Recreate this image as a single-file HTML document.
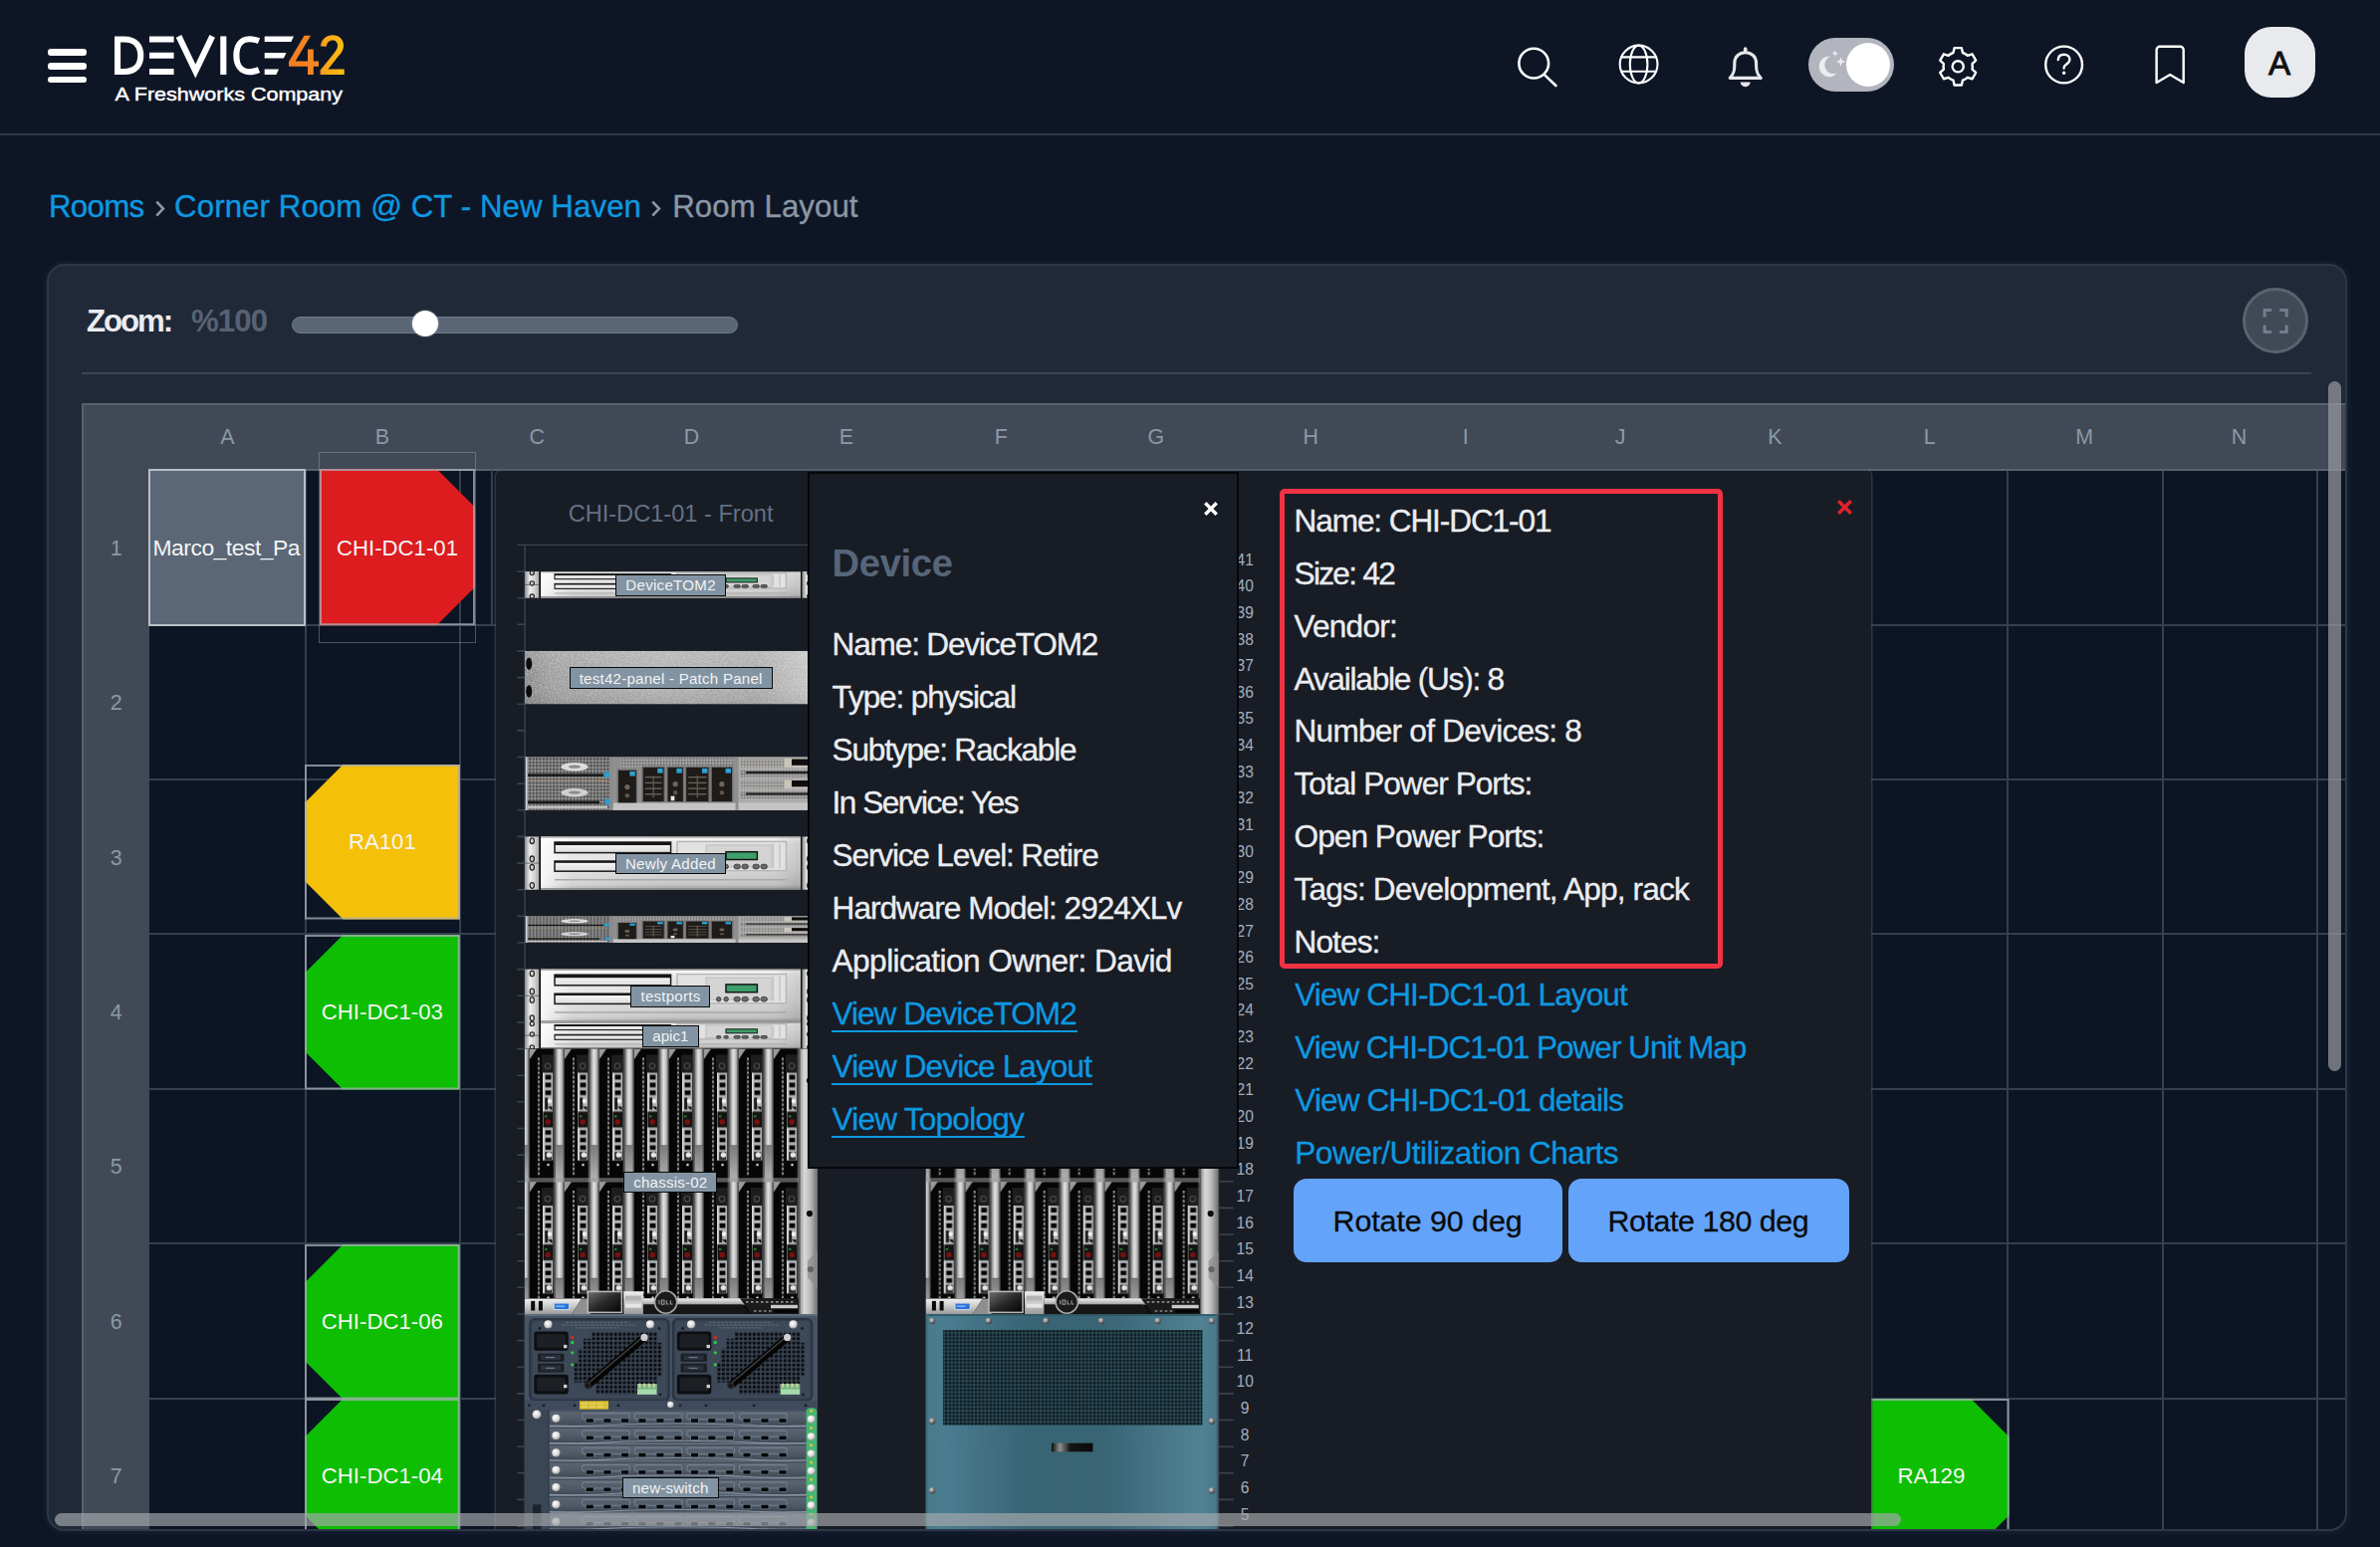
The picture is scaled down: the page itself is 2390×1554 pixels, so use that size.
<!DOCTYPE html>
<html lang="en"><head><meta charset="utf-8"><title>Room Layout - Device42</title>
<style>
*{box-sizing:border-box;margin:0;padding:0}
html,body{width:2390px;height:1554px;overflow:hidden;background:#0e1626;}
body{position:relative;font-family:"Liberation Sans",sans-serif;}
span{position:absolute;white-space:pre;display:block}
div{position:absolute}
svg{position:absolute;overflow:visible}
a{color:inherit}
</style></head><body>
<div style="left:0;top:133.6px;width:2390px;height:2.2px;background:#2f394b"></div>
<div style="left:48.3px;top:49.3px;width:38.8px;height:6.4px;border-radius:3.2px;background:#fff"></div>
<div style="left:48.3px;top:63.2px;width:38.8px;height:6.4px;border-radius:3.2px;background:#fff"></div>
<div style="left:48.3px;top:76.9px;width:38.8px;height:6.4px;border-radius:3.2px;background:#fff"></div>
<svg style="left:0;top:0" width="400" height="130" viewBox="0 0 400 130">
<defs><linearGradient id="lg42" gradientUnits="userSpaceOnUse" x1="291" y1="0" x2="346" y2="0"><stop offset="0" stop-color="#f47c20"/><stop offset="0.5" stop-color="#f6881f"/><stop offset="0.62" stop-color="#f9a21a"/><stop offset="1" stop-color="#fcc00f"/></linearGradient></defs>
<g fill="none" stroke="#fff" stroke-width="6.1">
<path d="M118.05 36.4V75M115 39.45H124.5C136.6 39.45 141.25 47 141.25 55.7C141.25 64.4 136.6 71.95 124.5 71.95H115"/>
<path d="M150 39.45H174.6M150 55.7H174.6M150 71.95H174.6"/>
<path d="M179.5 36.4L196.3 71.5L213.2 36.4" stroke-linejoin="miter" stroke-miterlimit="8"/>
<path d="M224.3 36.4V75"/>
<path d="M260 41.2C256 39.6 253.5 39.2 250.5 39.2C241.5 39.2 237.4 46.7 237.4 55.7C237.4 64.7 241.5 72.2 250.5 72.2C253.5 72.2 256 71.8 260 70.2"/>
</g>
<g fill="#fff">
<path d="M265.7 36.4H295L292.4 42H265.7Z"/><path d="M265.7 52.9H287.5L284.9 58.5H265.7Z"/><path d="M265.7 69.4H280L277.4 75H265.7Z"/>
</g>
<g fill="url(#lg42)">
<path d="M305.5 35.7H312L296.6 61.5H309V49.5H314.8V61.5H320V66.8H314.8V75H309V66.8H290V62Z"/>
<path d="M322 46.5C322.5 39.5 327.5 35.2 334 35.2C340.8 35.2 345 39.6 345 45.6C345 50.5 342.5 53.8 338.5 58L329.5 69.4H345.7V75H321.6V70.4L334 55.2C337.2 51.4 339 49 339 45.8C339 42.6 337 40.6 334 40.6C330.6 40.6 328.3 42.8 327.8 46.8Z"/>
</g>
</svg>
<svg style="left:0;top:0" width="400" height="130"><text x="115.6" y="100.7" font-family="Liberation Sans" font-size="18.2" fill="#fff" stroke="#fff" stroke-width="0.4" textLength="228.4" lengthAdjust="spacingAndGlyphs">A Freshworks Company</text></svg>
<svg style="left:0;top:0" width="2390" height="130" viewBox="0 0 2390 130" fill="none" stroke="#fff" stroke-width="2.6" stroke-linecap="round" stroke-linejoin="round">
<circle cx="1540.2" cy="63.6" r="14.9"/><path d="M1551.2 75.4L1562.4 86"/>
<g stroke-width="2.1"><circle cx="1645.6" cy="64.5" r="18.9"/><ellipse cx="1645.6" cy="64.5" rx="8.8" ry="18.9"/><path d="M1628.3 57.4H1662.9M1628.3 71.8H1662.9"/></g>
<g stroke="#e6e7ea" stroke-width="3.1"><path d="M1737.2 78.4H1768.2C1765 75 1763.6 72.5 1763.6 66V63.5C1763.6 57 1759 52.7 1752.7 52.7C1746.4 52.7 1741.8 57 1741.8 63.5V66C1741.8 72.5 1740.4 75 1737.2 78.4Z"/><path d="M1752.7 52.2V49" stroke-width="3.6"/></g>
<path d="M1747.7 82.6H1757.7A5 4.6 0 0 1 1747.7 82.6Z" fill="#e6e7ea" stroke="none"/>
</svg>
<div style="left:1815.9px;top:37.6px;width:86.4px;height:54.4px;border-radius:27.2px;background:#b2b5be"></div>
<div style="left:1853.9px;top:43px;width:44px;height:44px;border-radius:22px;background:#fff"></div>
<svg style="left:0;top:0" width="2390" height="130" viewBox="0 0 2390 130"><g fill="#ecedf0">
<path d="M1838.2 56.6A10.3 10.3 0 1 0 1844.8 73.6A7.6 7.6 0 0 1 1838.2 56.6Z"/>
<path d="M1842.7 50.3L1843.6 52.7L1846 53.6L1843.6 54.5L1842.7 56.9L1841.8 54.5L1839.4 53.6L1841.8 52.7Z"/>
<path d="M1848.5 57.2L1849.8 60.7L1853.3 62L1849.8 63.3L1848.5 66.8L1847.2 63.3L1843.7 62L1847.2 60.7Z"/>
</g></svg>
<svg style="left:0;top:0" width="2390" height="130" viewBox="0 0 2390 130" fill="none" stroke="#fff" stroke-width="2.4" stroke-linecap="round" stroke-linejoin="round">
<path d="M1961.45 53.00L1962.57 48.15L1969.83 48.15L1970.95 53.00A14.6 14.6 0 0 1 1975.78 55.78L1975.78 55.78L1980.54 54.33L1984.16 60.61L1980.53 64.01A14.6 14.6 0 0 1 1980.53 69.59L1980.53 69.59L1984.16 72.99L1980.54 79.27L1975.78 77.82A14.6 14.6 0 0 1 1970.95 80.60L1970.95 80.60L1969.83 85.45L1962.57 85.45L1961.45 80.60A14.6 14.6 0 0 1 1956.62 77.82L1956.62 77.82L1951.86 79.27L1948.24 72.99L1951.87 69.59A14.6 14.6 0 0 1 1951.87 64.01L1951.87 64.01L1948.24 60.61L1951.86 54.33L1956.62 55.78A14.6 14.6 0 0 1 1961.45 53.00Z"/><circle cx="1966.2" cy="66.8" r="5.6"/>
<circle cx="2072.6" cy="65" r="18.4"/>
<path d="M2066.8 60C2067 56.6 2069.6 54.8 2072.7 54.8C2076 54.8 2078.4 56.8 2078.4 59.7C2078.4 62.4 2076.6 63.5 2074.8 64.8C2073.2 65.9 2072.6 66.8 2072.6 68.6"/>
<circle cx="2072.6" cy="73.2" r="1.0" fill="#fff" stroke-width="1.5"/>
<path d="M2165.6 83V50A3.2 3.2 0 0 1 2168.8 46.8H2189.5A3.2 3.2 0 0 1 2192.7 50V83L2179.15 75Z"/>
</svg>
<div style="left:2254px;top:27px;width:71px;height:70.6px;border-radius:27px;background:#e8eaee"></div>
<span style="left:2277.90px;top:46.60px;font-size:33.2px;line-height:33.2px;color:#111;-webkit-text-stroke:0.9px #111;">A</span>
<span style="left:49.00px;top:192.19px;font-size:31.2px;line-height:31.2px;color:#0d99e1;letter-spacing:-0.682px;-webkit-text-stroke:0.35px #0d99e1;">Rooms</span>
<svg style="left:0;top:180px" width="900" height="60" viewBox="0 180 900 60" fill="none" stroke="#8b97a6" stroke-width="2.6"><path d="M157.3 202.6L163.9 209.6L157.3 216.6M655.3 202.6L661.9 209.6L655.3 216.6"/></svg>
<span style="left:175.10px;top:192.19px;font-size:31.2px;line-height:31.2px;color:#0d99e1;letter-spacing:0.101px;-webkit-text-stroke:0.35px #0d99e1;">Corner Room @ CT - New Haven</span>
<span style="left:675.20px;top:192.19px;font-size:31.2px;line-height:31.2px;color:#8b97a6;letter-spacing:0.084px;-webkit-text-stroke:0.35px #8b97a6;">Room Layout</span>
<div style="left:47px;top:265px;width:2310px;height:1273px;border-radius:18px;background:#202938;border:2px solid #2d3746;overflow:hidden;box-shadow:0 0 7px rgba(70,85,110,0.28)">
<div style="left:-49px;top:-267px;width:2390px;height:1554px">
<span style="left:86.90px;top:307.29px;font-size:31.2px;line-height:31.2px;color:#ebecf0;letter-spacing:-1.979px;font-weight:700;">Zoom:</span>
<span style="left:191.90px;top:307.29px;font-size:31.2px;line-height:31.2px;color:#566274;letter-spacing:-0.831px;font-weight:700;">%100</span>
<div style="left:292.8px;top:318.2px;width:448.4px;height:17.2px;border-radius:9px;background:#5a6676;border:1px solid #6f7a89"></div>
<div style="left:413.9px;top:312px;width:26px;height:26px;border-radius:13px;background:#fff;box-shadow:0 0 3px rgba(255,255,255,0.35)"></div>
<div style="left:82px;top:374px;width:2239px;height:2px;background:#3b4555"></div>
<div style="left:2252px;top:289px;width:66px;height:66px;border-radius:33px;background:#414856;border:3px solid #5b626e"></div>
<svg style="left:0;top:0" width="2390" height="400" viewBox="0 0 2390 400" fill="none" stroke="#6f7d8d" stroke-width="3.2"><path d="M2274.2 318.5V311.5H2281.2M2289.2 311.5H2296.2V318.5M2296.2 326.5V333.5H2289.2M2281.2 333.5H2274.2V326.5"/></svg>
<div style="left:82px;top:404.5px;width:2280px;height:1140px;background:#0c1524"></div>
<div style="left:82px;top:404.5px;width:2280px;height:67.5px;background:#424956"></div>
<div style="left:82px;top:404.5px;width:68px;height:1140px;background:#424956"></div>
<div style="left:82px;top:404.5px;width:2280px;height:2px;background:#59616d"></div>
<div style="left:82px;top:404.5px;width:2px;height:1140px;background:#59616d"></div>
<div style="left:305.9px;top:472.0px;width:2px;height:1080px;background:#353f4e"></div>
<div style="left:461.3px;top:472.0px;width:2px;height:1080px;background:#353f4e"></div>
<div style="left:616.7px;top:472.0px;width:2px;height:1080px;background:#353f4e"></div>
<div style="left:772.1px;top:472.0px;width:2px;height:1080px;background:#353f4e"></div>
<div style="left:927.5px;top:472.0px;width:2px;height:1080px;background:#353f4e"></div>
<div style="left:1082.9px;top:472.0px;width:2px;height:1080px;background:#353f4e"></div>
<div style="left:1238.3px;top:472.0px;width:2px;height:1080px;background:#353f4e"></div>
<div style="left:1393.7px;top:472.0px;width:2px;height:1080px;background:#353f4e"></div>
<div style="left:1549.1px;top:472.0px;width:2px;height:1080px;background:#353f4e"></div>
<div style="left:1704.5px;top:472.0px;width:2px;height:1080px;background:#353f4e"></div>
<div style="left:1859.9px;top:472.0px;width:2px;height:1080px;background:#353f4e"></div>
<div style="left:2015.3px;top:472.0px;width:2px;height:1080px;background:#353f4e"></div>
<div style="left:2170.7px;top:472.0px;width:2px;height:1080px;background:#353f4e"></div>
<div style="left:2326.1px;top:472.0px;width:2px;height:1080px;background:#353f4e"></div>
<div style="left:150px;top:471.0px;width:2210px;height:2px;background:#59616d"></div>
<div style="left:150px;top:626.5px;width:2210px;height:2px;background:#353f4e"></div>
<div style="left:150px;top:781.9px;width:2210px;height:2px;background:#353f4e"></div>
<div style="left:150px;top:937.3px;width:2210px;height:2px;background:#353f4e"></div>
<div style="left:150px;top:1092.8px;width:2210px;height:2px;background:#353f4e"></div>
<div style="left:150px;top:1248.2px;width:2210px;height:2px;background:#353f4e"></div>
<div style="left:150px;top:1403.7px;width:2210px;height:2px;background:#353f4e"></div>
<span style="left:221.26px;top:429.08px;font-size:21.4px;line-height:21.4px;color:#8a99a8;">A</span>
<span style="left:376.66px;top:429.08px;font-size:21.4px;line-height:21.4px;color:#8a99a8;">B</span>
<span style="left:531.47px;top:429.08px;font-size:21.4px;line-height:21.4px;color:#8a99a8;">C</span>
<span style="left:686.87px;top:429.08px;font-size:21.4px;line-height:21.4px;color:#8a99a8;">D</span>
<span style="left:842.86px;top:429.08px;font-size:21.4px;line-height:21.4px;color:#8a99a8;">E</span>
<span style="left:998.87px;top:429.08px;font-size:21.4px;line-height:21.4px;color:#8a99a8;">F</span>
<span style="left:1152.48px;top:429.08px;font-size:21.4px;line-height:21.4px;color:#8a99a8;">G</span>
<span style="left:1308.47px;top:429.08px;font-size:21.4px;line-height:21.4px;color:#8a99a8;">H</span>
<span style="left:1468.63px;top:429.08px;font-size:21.4px;line-height:21.4px;color:#8a99a8;">I</span>
<span style="left:1621.65px;top:429.08px;font-size:21.4px;line-height:21.4px;color:#8a99a8;">J</span>
<span style="left:1775.26px;top:429.08px;font-size:21.4px;line-height:21.4px;color:#8a99a8;">K</span>
<span style="left:1931.86px;top:429.08px;font-size:21.4px;line-height:21.4px;color:#8a99a8;">L</span>
<span style="left:2084.29px;top:429.08px;font-size:21.4px;line-height:21.4px;color:#8a99a8;">M</span>
<span style="left:2240.87px;top:429.08px;font-size:21.4px;line-height:21.4px;color:#8a99a8;">N</span>
<span style="left:110.76px;top:540.61px;font-size:21.4px;line-height:21.4px;color:#8a99a8;">1</span>
<span style="left:110.76px;top:696.06px;font-size:21.4px;line-height:21.4px;color:#8a99a8;">2</span>
<span style="left:110.76px;top:851.51px;font-size:21.4px;line-height:21.4px;color:#8a99a8;">3</span>
<span style="left:110.76px;top:1006.96px;font-size:21.4px;line-height:21.4px;color:#8a99a8;">4</span>
<span style="left:110.76px;top:1162.41px;font-size:21.4px;line-height:21.4px;color:#8a99a8;">5</span>
<span style="left:110.76px;top:1317.86px;font-size:21.4px;line-height:21.4px;color:#8a99a8;">6</span>
<span style="left:110.76px;top:1473.31px;font-size:21.4px;line-height:21.4px;color:#8a99a8;">7</span>
<div style="left:149.3px;top:471.4px;width:157.5px;height:157.2px;background:#5b6777;border:2.5px solid #b9bec5"></div>
<span style="left:153.50px;top:538.82px;font-size:22.9px;line-height:22.9px;color:#f4f4f4;letter-spacing:-0.497px;">Marco_test_Pa</span>
<div style="left:320.3px;top:453.8px;width:157.4px;height:192.2px;border:1.6px solid rgba(150,160,170,0.45)"></div>
<svg style="left:321px;top:471.4px" width="156" height="157.2"><polygon points="0,0 117.5,0 156,38.5 156,118.69999999999999 117.5,157.2 0,157.2" fill="#dc1c1e"/><rect x="1" y="1" width="154" height="155.2" fill="none" stroke="#aab0b8" stroke-opacity="0.75" stroke-width="2"/></svg>
<span style="left:337.95px;top:539.61px;font-size:22.2px;line-height:22.2px;color:#f4f4f4;">CHI-DC1-01</span>
<div style="left:492.8px;top:472px;width:2px;height:156px;background:#353f4e"></div>
<svg style="left:306px;top:768px" width="155.7" height="155.5"><polygon points="38.5,0 155.7,0 155.7,155.5 38.5,155.5 0,117.0 0,38.5" fill="#f5c008"/><rect x="1" y="1" width="153.7" height="153.5" fill="none" stroke="#aab0b8" stroke-opacity="0.75" stroke-width="2"/></svg>
<span style="left:349.91px;top:835.36px;font-size:22.2px;line-height:22.2px;color:#f4f4f4;">RA101</span>
<svg style="left:306px;top:938.6px" width="155.7" height="155.5"><polygon points="38.5,0 155.7,0 155.7,155.5 38.5,155.5 0,117.0 0,38.5" fill="#0dbe02"/><rect x="1" y="1" width="153.7" height="153.5" fill="none" stroke="#aab0b8" stroke-opacity="0.75" stroke-width="2"/></svg>
<span style="left:322.80px;top:1005.96px;font-size:22.2px;line-height:22.2px;color:#f4f4f4;">CHI-DC1-03</span>
<svg style="left:306px;top:1249.6px" width="155.7" height="155.5"><polygon points="38.5,0 155.7,0 155.7,155.5 38.5,155.5 0,117.0 0,38.5" fill="#0dbe02"/><rect x="1" y="1" width="153.7" height="153.5" fill="none" stroke="#aab0b8" stroke-opacity="0.75" stroke-width="2"/></svg>
<span style="left:322.80px;top:1316.96px;font-size:22.2px;line-height:22.2px;color:#f4f4f4;">CHI-DC1-06</span>
<svg style="left:306px;top:1405px" width="155.7" height="155.5"><polygon points="38.5,0 155.7,0 155.7,155.5 38.5,155.5 0,117.0 0,38.5" fill="#0dbe02"/><rect x="1" y="1" width="153.7" height="153.5" fill="none" stroke="#aab0b8" stroke-opacity="0.75" stroke-width="2"/></svg>
<span style="left:322.80px;top:1472.36px;font-size:22.2px;line-height:22.2px;color:#f4f4f4;">CHI-DC1-04</span>
<svg style="left:1861.5px;top:1405px" width="155.7" height="155.5"><polygon points="0,0 117.19999999999999,0 155.7,38.5 155.7,117.0 117.19999999999999,155.5 0,155.5" fill="#0dbe02"/><rect x="1" y="1" width="153.7" height="153.5" fill="none" stroke="#aab0b8" stroke-opacity="0.75" stroke-width="2"/></svg>
<span style="left:1905.41px;top:1472.36px;font-size:22.2px;line-height:22.2px;color:#f4f4f4;">RA129</span>
<div style="left:498px;top:473px;width:1381px;height:1100px;background:#181c25;border-radius:5px;box-shadow:0 0 0 1.5px rgba(70,80,95,0.55)"></div>
<span style="left:570.64px;top:505.02px;font-size:23.6px;line-height:23.6px;color:#647185;">CHI-DC1-01 - Front</span>
<svg style="left:0;top:0" width="2390" height="1554" viewBox="0 0 2390 1554"><defs>
<linearGradient id="gSilv" x1="0" y1="0" x2="0" y2="1"><stop offset="0" stop-color="#fbfbfb"/><stop offset="0.12" stop-color="#e9e9e9"/><stop offset="0.6" stop-color="#d9d9d9"/><stop offset="0.9" stop-color="#c6c6c6"/><stop offset="1" stop-color="#9a9a9a"/></linearGradient>
<linearGradient id="gSilvH" x1="0" y1="0" x2="1" y2="0"><stop offset="0" stop-color="#ffffff" stop-opacity="0.85"/><stop offset="0.12" stop-color="#ffffff" stop-opacity="0.25"/><stop offset="0.5" stop-color="#ffffff" stop-opacity="0"/><stop offset="0.9" stop-color="#000" stop-opacity="0.02"/><stop offset="1" stop-color="#000" stop-opacity="0.12"/></linearGradient>
<linearGradient id="gEar" x1="0" y1="0" x2="1" y2="0"><stop offset="0" stop-color="#8d8d8d"/><stop offset="0.35" stop-color="#ededed"/><stop offset="0.7" stop-color="#d2d2d2"/><stop offset="1" stop-color="#a4a4a4"/></linearGradient>
<linearGradient id="gSlot" x1="0" y1="0" x2="0" y2="1"><stop offset="0" stop-color="#fafafa"/><stop offset="1" stop-color="#dcdcdc"/></linearGradient>
<linearGradient id="gPatch" x1="0" y1="0" x2="1" y2="0"><stop offset="0" stop-color="#878787"/><stop offset="0.1" stop-color="#9c9c9c"/><stop offset="0.45" stop-color="#adadad"/><stop offset="0.8" stop-color="#a8a8a8"/><stop offset="1" stop-color="#c6c6c6"/></linearGradient>
<linearGradient id="gPatchV" x1="0" y1="0" x2="0" y2="1"><stop offset="0" stop-color="#fff" stop-opacity="0.12"/><stop offset="0.5" stop-color="#fff" stop-opacity="0"/><stop offset="1" stop-color="#000" stop-opacity="0.08"/></linearGradient>
<filter id="fNoise" x="0" y="0" width="100%" height="100%"><feTurbulence type="fractalNoise" baseFrequency="0.75" numOctaves="2" seed="3" result="n"/><feColorMatrix type="matrix" values="0 0 0 0 1  0 0 0 0 1  0 0 0 0 1  1.6 0 0 0 -0.62"/><feComposite in2="SourceGraphic" operator="in"/></filter>
<pattern id="pMeshL" width="3.4" height="3.4" patternUnits="userSpaceOnUse"><rect width="3.4" height="3.4" fill="#a2a2a2"/><rect x="0.6" y="0.6" width="2.5" height="2.5" fill="#4c4c4c"/></pattern>
<pattern id="pMeshM" width="3" height="3" patternUnits="userSpaceOnUse"><rect width="3" height="3" fill="#b2b2b2"/><rect x="0.6" y="0.6" width="2" height="2" fill="#666"/></pattern>
<linearGradient id="gHandle" x1="0" y1="0" x2="1" y2="0"><stop offset="0" stop-color="#666"/><stop offset="0.18" stop-color="#909090"/><stop offset="0.45" stop-color="#e4e4e4"/><stop offset="0.7" stop-color="#c2c2c2"/><stop offset="1" stop-color="#727272"/></linearGradient>
<linearGradient id="gHandleLo" x1="0" y1="0" x2="0" y2="1"><stop offset="0" stop-color="#7a7a7a"/><stop offset="1" stop-color="#b4b4b4"/></linearGradient>
<linearGradient id="gRail" x1="0" y1="0" x2="1" y2="0"><stop offset="0" stop-color="#8a8a8a"/><stop offset="0.3" stop-color="#d8d8d8"/><stop offset="0.6" stop-color="#bdbdbd"/><stop offset="1" stop-color="#6f6f6f"/></linearGradient>
<linearGradient id="gBar" x1="0" y1="0" x2="0" y2="1"><stop offset="0" stop-color="#f0f0f0"/><stop offset="0.5" stop-color="#c9c9c9"/><stop offset="1" stop-color="#9a9a9a"/></linearGradient>
<linearGradient id="gLcd" x1="0" y1="0" x2="1" y2="1"><stop offset="0" stop-color="#6a6a6a"/><stop offset="0.5" stop-color="#2a2a2a"/><stop offset="1" stop-color="#050505"/></linearGradient>
<pattern id="pBlade" width="35" height="133.5" patternUnits="userSpaceOnUse">
 <rect width="35" height="133.5" fill="#060606"/>
 <polygon points="4.5,0 12,0 4.5,11" fill="#9a9a9a"/>
 <rect x="12.7" y="9" width="2.6" height="119" fill="#1a1a1a"/>
 <path d="M14 9V128" stroke="#8c8c8c" stroke-width="2" stroke-dasharray="2.4 2.2"/>
 <rect x="17" y="6" width="12" height="18" fill="#1d1d1d"/>
 <circle cx="23" cy="17.2" r="2.8" fill="none" stroke="#4d4d4d" stroke-width="1.1"/>
 <rect x="18" y="24" width="10.3" height="88" fill="#b0b0b0"/>
 <rect x="18" y="24" width="1.6" height="88" fill="#d6d6d6"/>
 <rect x="20.6" y="26.2" width="5.8" height="4.6" fill="#050505"/><rect x="20.6" y="34" width="5.8" height="4.6" fill="#050505"/><rect x="20.6" y="41.8" width="5.8" height="4.6" fill="#050505"/>
 <rect x="20.2" y="49" width="3" height="12" fill="#1b1b1b"/><circle cx="25" cy="52.5" r="2.2" fill="#f2f2f2"/><polygon points="23,58 27.5,58 27.5,62" fill="#0a0a0a"/>
 <rect x="18.4" y="63" width="9.6" height="16" fill="#141414"/><circle cx="23.2" cy="73.4" r="2.7" fill="#7d0f0f"/><rect x="20" y="67" width="2.4" height="1.6" fill="#2c9b2c"/>
 <rect x="20.6" y="81.8" width="5.8" height="4.4" fill="#050505"/><rect x="20.6" y="89.4" width="5.8" height="4.4" fill="#050505"/><rect x="20.6" y="97" width="5.8" height="4.4" fill="#050505"/>
 <rect x="20.2" y="103.5" width="7" height="8" fill="#2a2a2a"/><circle cx="24.4" cy="106.5" r="2.7" fill="#e6e6e6"/>
 <rect x="22.4" y="115.4" width="2.2" height="2.2" fill="#dddddd"/>
 <rect x="28.6" y="0" width="1.4" height="133.5" fill="#3c3c3c"/>
 <rect x="29.8" y="0" width="9.7" height="96.8" fill="url(#gHandle)"/>
 <rect x="-5.2" y="0" width="9.7" height="96.8" fill="url(#gHandle)"/>
 <rect x="29.8" y="96.8" width="9.7" height="36.7" fill="url(#gHandleLo)"/>
 <rect x="-5.2" y="96.8" width="9.7" height="36.7" fill="url(#gHandleLo)"/>
 <rect x="29.8" y="0" width="1" height="133.5" fill="#555"/><rect x="3.6" y="0" width="0.9" height="133.5" fill="#4a4a4a"/>
</pattern>
<g id="chassis">
 <rect x="0" y="0" width="294" height="266.6" fill="#060606"/>
 <rect x="0" y="0" width="275" height="252" fill="url(#pBlade)"/>
 <rect x="0" y="129.6" width="275" height="4.4" fill="#9a9a9a" opacity="0.55"/>
 <rect x="275" y="0" width="19" height="266.6" fill="url(#gRail)"/>
 <rect x="275" y="0" width="1.6" height="266.6" fill="#5a5a5a"/>
 <circle cx="286" cy="32" r="3.1" fill="#0c0c0c"/><circle cx="287" cy="88" r="3.1" fill="#0c0c0c"/><circle cx="286" cy="165.5" r="3.1" fill="#0c0c0c"/><circle cx="287" cy="221.5" r="3.1" fill="#0c0c0c"/>
 <path d="M294 70L284 80V97L294 107Z M294 203L284 213V230L294 240Z" fill="#8b8b8b" opacity="0.7"/>
 <!-- bottom bar -->
 <rect x="0" y="250.6" width="275" height="16" fill="#0b0b0b"/>
 <polygon points="0,251 57,251 47,266.6 0,266.6" fill="url(#gBar)"/>
 <polygon points="57,251 66,251 66,266.6 47,266.6" fill="#8f8f8f"/>
 <rect x="6.2" y="253.3" width="4" height="9.6" fill="#0a0a0a"/><rect x="13.9" y="253.3" width="4" height="9.6" fill="#0a0a0a"/>
 <rect x="28.6" y="255" width="16.6" height="7.4" rx="1" fill="#cfd6de"/><rect x="29.8" y="256" width="14.2" height="5.4" fill="#2a73dc"/><rect x="31" y="257.8" width="9" height="1.6" fill="#7fb2f3"/>
 <rect x="62.5" y="243" width="35.6" height="22.6" fill="#b9b9b9"/><rect x="64" y="244.6" width="32.6" height="19.4" fill="url(#gLcd)"/>
 <rect x="99.3" y="243.6" width="19.6" height="23" fill="url(#gBar)"/><rect x="101" y="248" width="16" height="5" fill="#b3b3b3"/><rect x="101" y="256" width="16" height="4" fill="#e6e6e6"/>
 <rect x="119" y="250.6" width="110" height="6.4" fill="url(#gBar)"/>
 <polygon points="119,257 218,257 226,266.6 119,266.6" fill="#161616"/>
 <polygon points="216,250.6 275,250.6 275,266.6 228,266.6" fill="#1b1b1b"/>
 <path d="M222 254.3H272M230 263.4H250" stroke="#8a8a8a" stroke-width="1.6" stroke-dasharray="2.6 2.4"/>
 <rect x="247" y="257.2" width="27" height="3.4" fill="#c9c9c9"/><rect x="250" y="261.6" width="24" height="3.6" fill="#050505"/>
 <circle cx="141.6" cy="254.4" r="11.2" fill="#1b1b1b" stroke="#a7a7a7" stroke-width="1.6"/>
 <path d="M135 252.4V256.6M137.4 252.4H140V256.6H137.4ZM142.4 252.6V256.4H144.6M146.4 252.6V256.4H148.6" stroke="#9a9a9a" stroke-width="1.1" fill="none"/>
</g>
</defs><path d="M519.2 547.4H1243M527.1 547.4V1554M1223.6 547.4V1554" stroke="#3a434d" stroke-width="1.4" fill="none"/><path d="M519.2 574.0H527.1M1223.6 574.0H1238.8M519.2 600.7H527.1M1223.6 600.7H1238.8M519.2 627.3H527.1M1223.6 627.3H1238.8M519.2 654.0H527.1M1223.6 654.0H1238.8M519.2 680.6H527.1M1223.6 680.6H1238.8M519.2 707.2H527.1M1223.6 707.2H1238.8M519.2 733.9H527.1M1223.6 733.9H1238.8M519.2 760.5H527.1M1223.6 760.5H1238.8M519.2 787.2H527.1M1223.6 787.2H1238.8M519.2 813.8H527.1M1223.6 813.8H1238.8M519.2 840.4H527.1M1223.6 840.4H1238.8M519.2 867.1H527.1M1223.6 867.1H1238.8M519.2 893.7H527.1M1223.6 893.7H1238.8M519.2 920.4H527.1M1223.6 920.4H1238.8M519.2 947.0H527.1M1223.6 947.0H1238.8M519.2 973.6H527.1M1223.6 973.6H1238.8M519.2 1000.3H527.1M1223.6 1000.3H1238.8M519.2 1026.9H527.1M1223.6 1026.9H1238.8M519.2 1053.6H527.1M1223.6 1053.6H1238.8M519.2 1080.2H527.1M1223.6 1080.2H1238.8M519.2 1106.8H527.1M1223.6 1106.8H1238.8M519.2 1133.5H527.1M1223.6 1133.5H1238.8M519.2 1160.1H527.1M1223.6 1160.1H1238.8M519.2 1186.8H527.1M1223.6 1186.8H1238.8M519.2 1213.4H527.1M1223.6 1213.4H1238.8M519.2 1240.0H527.1M1223.6 1240.0H1238.8M519.2 1266.7H527.1M1223.6 1266.7H1238.8M519.2 1293.3H527.1M1223.6 1293.3H1238.8M519.2 1320.0H527.1M1223.6 1320.0H1238.8M519.2 1346.6H527.1M1223.6 1346.6H1238.8M519.2 1373.2H527.1M1223.6 1373.2H1238.8M519.2 1399.9H527.1M1223.6 1399.9H1238.8M519.2 1426.5H527.1M1223.6 1426.5H1238.8M519.2 1453.2H527.1M1223.6 1453.2H1238.8M519.2 1479.8H527.1M1223.6 1479.8H1238.8M519.2 1506.4H527.1M1223.6 1506.4H1238.8M519.2 1533.1H527.1M1223.6 1533.1H1238.8M519.2 1559.7H527.1M1223.6 1559.7H1238.8M519.2 1586.4H527.1M1223.6 1586.4H1238.8" stroke="#3a434d" stroke-width="1.6" fill="none"/><rect x="527" y="574.04" width="14.5" height="26.64" fill="url(#gEar)"/><ellipse cx="534.3" cy="575.6" rx="2.1" ry="2.1" fill="#d9d9d9" stroke="#2b2b2b" stroke-width="1.3"/><ellipse cx="534.3" cy="586.0" rx="2.1" ry="2.1" fill="#d9d9d9" stroke="#2b2b2b" stroke-width="1.3"/><ellipse cx="534.3" cy="599.1" rx="2.1" ry="2.1" fill="#d9d9d9" stroke="#2b2b2b" stroke-width="1.3"/><path d="M527 587.4H541.5" stroke="#555" stroke-width="0.8"/><rect x="541.5" y="574.04" width="1.6" height="26.64" fill="#111"/><rect x="543.1" y="574.04" width="261" height="26.64" fill="url(#gSilv)"/><rect x="543.1" y="574.04" width="261" height="26.64" fill="url(#gSilvH)"/><rect x="543.1" y="574.04" width="261" height="1.2" fill="#a0a0a0"/><rect x="557" y="576.7" width="116.6" height="5.0" fill="url(#gSlot)" stroke="#1a1a1a" stroke-width="1.1"/><rect x="557" y="576.7" width="116.6" height="1.4" fill="#161616"/><rect x="557" y="586.4" width="116.6" height="5.0" fill="url(#gSlot)" stroke="#1a1a1a" stroke-width="1.1"/><rect x="557" y="586.4" width="116.6" height="1.1" fill="#161616"/><rect x="680" y="575.6" width="109.5" height="15.4" fill="#e2e2e2" stroke="#b5b5b5" stroke-width="1.4"/><rect x="709" y="577.1" width="66" height="12.4" fill="#d4d4d4" stroke="#bdbdbd" stroke-width="1"/><path d="M776.5 577.6V589.0M783 577.6V589.0" stroke="#c2c2c2" stroke-width="1.3"/><rect x="729" y="580.9" width="31.4" height="4.0" fill="#3e9f6c" stroke="#151515" stroke-width="1"/><rect x="719.5" y="587.6" width="4.4" height="2.6" rx="1.3" fill="#6a6a6a" stroke="#2c2c2c" stroke-width="0.8"/><rect x="727" y="587.6" width="4.4" height="2.6" rx="1.3" fill="#6a6a6a" stroke="#2c2c2c" stroke-width="0.8"/><rect x="737" y="587.6" width="6.4" height="2.6" rx="1.3" fill="#6a6a6a" stroke="#2c2c2c" stroke-width="0.8"/><rect x="745" y="587.6" width="6.4" height="2.6" rx="1.3" fill="#6a6a6a" stroke="#2c2c2c" stroke-width="0.8"/><rect x="756" y="587.6" width="6.4" height="2.6" rx="1.3" fill="#6a6a6a" stroke="#2c2c2c" stroke-width="0.8"/><rect x="764" y="587.6" width="6.4" height="2.6" rx="1.3" fill="#6a6a6a" stroke="#2c2c2c" stroke-width="0.8"/><path d="M557 596.0H790" stroke="#a9a9a9" stroke-width="1"/><rect x="543.1" y="599.1" width="261" height="1.6" fill="#8d8d8d"/><rect x="804.1" y="574.04" width="1.4" height="26.64" fill="#111"/><rect x="805.5" y="574.04" width="14.5" height="26.64" fill="url(#gEar)"/><ellipse cx="812.8" cy="575.6" rx="2.1" ry="2.1" fill="#d9d9d9" stroke="#2b2b2b" stroke-width="1.3"/><ellipse cx="812.8" cy="586.0" rx="2.1" ry="2.1" fill="#d9d9d9" stroke="#2b2b2b" stroke-width="1.3"/><ellipse cx="812.8" cy="599.1" rx="2.1" ry="2.1" fill="#d9d9d9" stroke="#2b2b2b" stroke-width="1.3"/><rect x="527" y="653.96" width="293" height="53.28" fill="url(#gPatch)"/><rect x="527" y="653.96" width="293" height="53.28" fill="#fff" filter="url(#fNoise)" opacity="0.55"/><rect x="527" y="653.96" width="293" height="53.28" fill="url(#gPatchV)"/><ellipse cx="531.2" cy="666.7" rx="3" ry="6.2" fill="#0a0a0a"/><ellipse cx="815.8" cy="666.7" rx="3" ry="6.2" fill="#0a0a0a"/><ellipse cx="531.2" cy="694.5" rx="3" ry="6.2" fill="#0a0a0a"/><ellipse cx="815.8" cy="694.5" rx="3" ry="6.2" fill="#0a0a0a"/><g transform="translate(527,760.52) scale(1,1.0129)"><rect x="0" y="0" width="293" height="52.6" fill="#9b9b9b"/><rect x="0" y="0" width="85.4" height="52.6" fill="url(#pMeshL)"/><rect x="0" y="0" width="2.6" height="52.6" fill="#cfd3d6"/><rect x="0" y="0" width="1" height="52.6" fill="#3a6aa8"/><ellipse cx="50" cy="9.6" rx="13.6" ry="4.2" fill="#dcdcdc"/><ellipse cx="50" cy="9.6" rx="6" ry="1.6" fill="#8b8b8b"/><ellipse cx="50" cy="35.2" rx="13.6" ry="4.2" fill="#d0d0d0"/><ellipse cx="50" cy="35.2" rx="6" ry="1.6" fill="#8b8b8b"/><rect x="3" y="16.6" width="76" height="2.6" fill="#1b1b1b"/><rect x="3" y="43.4" width="72" height="2.8" fill="#1b1b1b"/><rect x="3" y="22.6" width="80" height="1.2" fill="#b89a74" opacity="0.7"/><rect x="3" y="48.6" width="80" height="2" fill="#c9c9c9"/><rect x="79.6" y="14.6" width="5.4" height="5.4" fill="#2b9ccf"/><rect x="80.6" y="41.6" width="5.4" height="5.4" fill="#2b9ccf"/><rect x="85.4" y="0" width="3.4" height="52.6" fill="#8a8a8a"/><rect x="88.8" y="0" width="125.2" height="52.6" fill="#8f8f8f"/><rect x="96" y="1.2" width="114" height="8.4" fill="url(#pMeshM)"/><rect x="92.6" y="11.799999999999999" width="20.6" height="37.199999999999996" fill="#6f6f6f"/><rect x="94" y="13.2" width="17.8" height="34.4" fill="#1f1b18"/><rect x="105.39999999999999" y="14.2" width="5.4" height="4.6" fill="#2ba3d6"/><circle cx="102.9" cy="29.7" r="2.6" fill="#6b655c"/><circle cx="102.9" cy="38.2" r="2.2" fill="#5b554c"/><rect x="117.39999999999999" y="8.9" width="23.6" height="36.4" fill="#6f6f6f"/><rect x="118.8" y="10.3" width="20.8" height="33.6" fill="#1f1b18"/><rect x="133.2" y="11.3" width="5.4" height="4.6" fill="#2ba3d6"/><rect x="120.8" y="19.3" width="16.8" height="1.3" fill="#6a655d"/><rect x="120.8" y="24.9" width="16.8" height="1.3" fill="#6a655d"/><rect x="120.8" y="30.5" width="16.8" height="1.3" fill="#6a655d"/><rect x="120.8" y="36.1" width="16.8" height="1.3" fill="#6a655d"/><rect x="128.5" y="18.3" width="1.4" height="22" fill="#5a554d"/><rect x="142.2" y="8.9" width="18.0" height="36.4" fill="#6f6f6f"/><rect x="143.6" y="10.3" width="15.2" height="33.6" fill="#1f1b18"/><rect x="152.39999999999998" y="11.3" width="5.4" height="4.6" fill="#2ba3d6"/><circle cx="151.2" cy="26.8" r="2.6" fill="#6b655c"/><circle cx="151.2" cy="35.3" r="2.2" fill="#5b554c"/><rect x="160.79999999999998" y="8.9" width="25.0" height="36.4" fill="#6f6f6f"/><rect x="162.2" y="10.3" width="22.2" height="33.6" fill="#1f1b18"/><rect x="177.99999999999997" y="11.3" width="5.4" height="4.6" fill="#2ba3d6"/><rect x="164.2" y="19.3" width="18.2" height="1.3" fill="#6a655d"/><rect x="164.2" y="24.9" width="18.2" height="1.3" fill="#6a655d"/><rect x="164.2" y="30.5" width="18.2" height="1.3" fill="#6a655d"/><rect x="164.2" y="36.1" width="18.2" height="1.3" fill="#6a655d"/><rect x="172.6" y="18.3" width="1.4" height="22" fill="#5a554d"/><rect x="186.4" y="8.9" width="23.0" height="36.4" fill="#6f6f6f"/><rect x="187.8" y="10.3" width="20.2" height="33.6" fill="#1f1b18"/><rect x="201.6" y="11.3" width="5.4" height="4.6" fill="#2ba3d6"/><circle cx="197.9" cy="26.8" r="2.6" fill="#6b655c"/><circle cx="197.9" cy="35.3" r="2.2" fill="#5b554c"/><rect x="146.6" y="38.6" width="3.8" height="4.6" fill="#e8e8e8"/><rect x="88.8" y="45.4" width="125.2" height="7.2" fill="#c4c4c4"/><rect x="211.6" y="0" width="3" height="52.6" fill="#8e8e8e"/><rect x="214.6" y="0" width="78.4" height="52.6" fill="#ababab"/><rect x="216.6" y="1.6" width="76.4" height="8.6" fill="#c9c4b8"/><rect x="216.6" y="1.6" width="44" height="8.6" fill="url(#pMeshM)" opacity="0.8"/><rect x="268" y="2.0" width="25" height="6.2" fill="#0d0d0d"/><rect x="216.6" y="13.2" width="76.4" height="6.4" fill="url(#pMeshM)"/><rect x="222" y="14.2" width="62" height="2.2" fill="#232323"/><rect x="216.6" y="22.8" width="76.4" height="8.6" fill="#c9c4b8"/><rect x="216.6" y="22.8" width="44" height="8.6" fill="url(#pMeshM)" opacity="0.8"/><rect x="268" y="23.2" width="25" height="6.2" fill="#0d0d0d"/><rect x="216.6" y="34.4" width="76.4" height="6.4" fill="url(#pMeshM)"/><rect x="222" y="35.4" width="62" height="2.2" fill="#232323"/><rect x="214.6" y="45.4" width="78.4" height="7.2" fill="#c4c4c4"/></g><rect x="527" y="840.44" width="14.5" height="53.28" fill="url(#gEar)"/><ellipse cx="534.3" cy="844.7" rx="2.1" ry="2.8" fill="#d9d9d9" stroke="#2b2b2b" stroke-width="1.3"/><ellipse cx="534.3" cy="862.8" rx="2.1" ry="2.8" fill="#d9d9d9" stroke="#2b2b2b" stroke-width="1.3"/><ellipse cx="534.3" cy="871.3" rx="2.1" ry="2.8" fill="#d9d9d9" stroke="#2b2b2b" stroke-width="1.3"/><ellipse cx="534.3" cy="889.5" rx="2.1" ry="2.8" fill="#d9d9d9" stroke="#2b2b2b" stroke-width="1.3"/><path d="M527 867.1H541.5" stroke="#555" stroke-width="0.8"/><rect x="541.5" y="840.44" width="1.6" height="53.28" fill="#111"/><rect x="543.1" y="840.44" width="261" height="53.28" fill="url(#gSilv)"/><rect x="543.1" y="840.44" width="261" height="53.28" fill="url(#gSilvH)"/><rect x="543.1" y="840.44" width="261" height="1.2" fill="#a0a0a0"/><rect x="557" y="846.0" width="116.6" height="10.6" fill="url(#gSlot)" stroke="#1a1a1a" stroke-width="1.5"/><rect x="557" y="846.0" width="116.6" height="3.0" fill="#161616"/><rect x="557" y="865.0" width="116.6" height="10.2" fill="url(#gSlot)" stroke="#1a1a1a" stroke-width="1.5"/><rect x="557" y="865.0" width="116.6" height="1.8" fill="#161616"/><rect x="680" y="845.4" width="109.5" height="29.2" fill="#e2e2e2" stroke="#b5b5b5" stroke-width="1.4"/><rect x="709" y="848.9" width="66" height="22.2" fill="#d4d4d4" stroke="#bdbdbd" stroke-width="1"/><path d="M776.5 847.4V872.6M783 847.4V872.6" stroke="#c2c2c2" stroke-width="1.3"/><rect x="729" y="855.7" width="31.4" height="7.8" fill="#3e9f6c" stroke="#151515" stroke-width="1.5"/><rect x="719.5" y="868.2" width="4.4" height="4.6" rx="2.3" fill="#6a6a6a" stroke="#2c2c2c" stroke-width="0.8"/><rect x="727" y="868.2" width="4.4" height="4.6" rx="2.3" fill="#6a6a6a" stroke="#2c2c2c" stroke-width="0.8"/><rect x="737" y="868.2" width="6.4" height="4.6" rx="2.3" fill="#6a6a6a" stroke="#2c2c2c" stroke-width="0.8"/><rect x="745" y="868.2" width="6.4" height="4.6" rx="2.3" fill="#6a6a6a" stroke="#2c2c2c" stroke-width="0.8"/><rect x="756" y="868.2" width="6.4" height="4.6" rx="2.3" fill="#6a6a6a" stroke="#2c2c2c" stroke-width="0.8"/><rect x="764" y="868.2" width="6.4" height="4.6" rx="2.3" fill="#6a6a6a" stroke="#2c2c2c" stroke-width="0.8"/><path d="M557 883.8H790" stroke="#a9a9a9" stroke-width="1.4"/><rect x="543.1" y="892.1" width="261" height="1.6" fill="#8d8d8d"/><rect x="804.1" y="840.44" width="1.4" height="53.28" fill="#111"/><rect x="805.5" y="840.44" width="14.5" height="53.28" fill="url(#gEar)"/><ellipse cx="812.8" cy="844.7" rx="2.1" ry="2.8" fill="#d9d9d9" stroke="#2b2b2b" stroke-width="1.3"/><ellipse cx="812.8" cy="862.8" rx="2.1" ry="2.8" fill="#d9d9d9" stroke="#2b2b2b" stroke-width="1.3"/><ellipse cx="812.8" cy="871.3" rx="2.1" ry="2.8" fill="#d9d9d9" stroke="#2b2b2b" stroke-width="1.3"/><ellipse cx="812.8" cy="889.5" rx="2.1" ry="2.8" fill="#d9d9d9" stroke="#2b2b2b" stroke-width="1.3"/><g transform="translate(527,920.36) scale(1,0.5065)"><rect x="0" y="0" width="293" height="52.6" fill="#9b9b9b"/><rect x="0" y="0" width="85.4" height="52.6" fill="url(#pMeshL)"/><rect x="0" y="0" width="2.6" height="52.6" fill="#cfd3d6"/><rect x="0" y="0" width="1" height="52.6" fill="#3a6aa8"/><ellipse cx="50" cy="9.6" rx="13.6" ry="4.2" fill="#dcdcdc"/><ellipse cx="50" cy="9.6" rx="6" ry="1.6" fill="#8b8b8b"/><ellipse cx="50" cy="35.2" rx="13.6" ry="4.2" fill="#d0d0d0"/><ellipse cx="50" cy="35.2" rx="6" ry="1.6" fill="#8b8b8b"/><rect x="3" y="16.6" width="76" height="2.6" fill="#1b1b1b"/><rect x="3" y="43.4" width="72" height="2.8" fill="#1b1b1b"/><rect x="3" y="22.6" width="80" height="1.2" fill="#b89a74" opacity="0.7"/><rect x="3" y="48.6" width="80" height="2" fill="#c9c9c9"/><rect x="79.6" y="14.6" width="5.4" height="5.4" fill="#2b9ccf"/><rect x="80.6" y="41.6" width="5.4" height="5.4" fill="#2b9ccf"/><rect x="85.4" y="0" width="3.4" height="52.6" fill="#8a8a8a"/><rect x="88.8" y="0" width="125.2" height="52.6" fill="#8f8f8f"/><rect x="96" y="1.2" width="114" height="8.4" fill="url(#pMeshM)"/><rect x="92.6" y="11.799999999999999" width="20.6" height="37.199999999999996" fill="#6f6f6f"/><rect x="94" y="13.2" width="17.8" height="34.4" fill="#1f1b18"/><rect x="105.39999999999999" y="14.2" width="5.4" height="4.6" fill="#2ba3d6"/><circle cx="102.9" cy="29.7" r="2.6" fill="#6b655c"/><circle cx="102.9" cy="38.2" r="2.2" fill="#5b554c"/><rect x="117.39999999999999" y="8.9" width="23.6" height="36.4" fill="#6f6f6f"/><rect x="118.8" y="10.3" width="20.8" height="33.6" fill="#1f1b18"/><rect x="133.2" y="11.3" width="5.4" height="4.6" fill="#2ba3d6"/><rect x="120.8" y="19.3" width="16.8" height="1.3" fill="#6a655d"/><rect x="120.8" y="24.9" width="16.8" height="1.3" fill="#6a655d"/><rect x="120.8" y="30.5" width="16.8" height="1.3" fill="#6a655d"/><rect x="120.8" y="36.1" width="16.8" height="1.3" fill="#6a655d"/><rect x="128.5" y="18.3" width="1.4" height="22" fill="#5a554d"/><rect x="142.2" y="8.9" width="18.0" height="36.4" fill="#6f6f6f"/><rect x="143.6" y="10.3" width="15.2" height="33.6" fill="#1f1b18"/><rect x="152.39999999999998" y="11.3" width="5.4" height="4.6" fill="#2ba3d6"/><circle cx="151.2" cy="26.8" r="2.6" fill="#6b655c"/><circle cx="151.2" cy="35.3" r="2.2" fill="#5b554c"/><rect x="160.79999999999998" y="8.9" width="25.0" height="36.4" fill="#6f6f6f"/><rect x="162.2" y="10.3" width="22.2" height="33.6" fill="#1f1b18"/><rect x="177.99999999999997" y="11.3" width="5.4" height="4.6" fill="#2ba3d6"/><rect x="164.2" y="19.3" width="18.2" height="1.3" fill="#6a655d"/><rect x="164.2" y="24.9" width="18.2" height="1.3" fill="#6a655d"/><rect x="164.2" y="30.5" width="18.2" height="1.3" fill="#6a655d"/><rect x="164.2" y="36.1" width="18.2" height="1.3" fill="#6a655d"/><rect x="172.6" y="18.3" width="1.4" height="22" fill="#5a554d"/><rect x="186.4" y="8.9" width="23.0" height="36.4" fill="#6f6f6f"/><rect x="187.8" y="10.3" width="20.2" height="33.6" fill="#1f1b18"/><rect x="201.6" y="11.3" width="5.4" height="4.6" fill="#2ba3d6"/><circle cx="197.9" cy="26.8" r="2.6" fill="#6b655c"/><circle cx="197.9" cy="35.3" r="2.2" fill="#5b554c"/><rect x="146.6" y="38.6" width="3.8" height="4.6" fill="#e8e8e8"/><rect x="88.8" y="45.4" width="125.2" height="7.2" fill="#c4c4c4"/><rect x="211.6" y="0" width="3" height="52.6" fill="#8e8e8e"/><rect x="214.6" y="0" width="78.4" height="52.6" fill="#ababab"/><rect x="216.6" y="1.6" width="76.4" height="8.6" fill="#c9c4b8"/><rect x="216.6" y="1.6" width="44" height="8.6" fill="url(#pMeshM)" opacity="0.8"/><rect x="268" y="2.0" width="25" height="6.2" fill="#0d0d0d"/><rect x="216.6" y="13.2" width="76.4" height="6.4" fill="url(#pMeshM)"/><rect x="222" y="14.2" width="62" height="2.2" fill="#232323"/><rect x="216.6" y="22.8" width="76.4" height="8.6" fill="#c9c4b8"/><rect x="216.6" y="22.8" width="44" height="8.6" fill="url(#pMeshM)" opacity="0.8"/><rect x="268" y="23.2" width="25" height="6.2" fill="#0d0d0d"/><rect x="216.6" y="34.4" width="76.4" height="6.4" fill="url(#pMeshM)"/><rect x="222" y="35.4" width="62" height="2.2" fill="#232323"/><rect x="214.6" y="45.4" width="78.4" height="7.2" fill="#c4c4c4"/></g><rect x="527" y="973.64" width="14.5" height="53.28" fill="url(#gEar)"/><ellipse cx="534.3" cy="977.9" rx="2.1" ry="2.8" fill="#d9d9d9" stroke="#2b2b2b" stroke-width="1.3"/><ellipse cx="534.3" cy="996.0" rx="2.1" ry="2.8" fill="#d9d9d9" stroke="#2b2b2b" stroke-width="1.3"/><ellipse cx="534.3" cy="1004.5" rx="2.1" ry="2.8" fill="#d9d9d9" stroke="#2b2b2b" stroke-width="1.3"/><ellipse cx="534.3" cy="1022.7" rx="2.1" ry="2.8" fill="#d9d9d9" stroke="#2b2b2b" stroke-width="1.3"/><path d="M527 1000.3H541.5" stroke="#555" stroke-width="0.8"/><rect x="541.5" y="973.64" width="1.6" height="53.28" fill="#111"/><rect x="543.1" y="973.64" width="261" height="53.28" fill="url(#gSilv)"/><rect x="543.1" y="973.64" width="261" height="53.28" fill="url(#gSilvH)"/><rect x="543.1" y="973.64" width="261" height="1.2" fill="#a0a0a0"/><rect x="557" y="979.2" width="116.6" height="10.6" fill="url(#gSlot)" stroke="#1a1a1a" stroke-width="1.5"/><rect x="557" y="979.2" width="116.6" height="3.0" fill="#161616"/><rect x="557" y="998.2" width="116.6" height="10.2" fill="url(#gSlot)" stroke="#1a1a1a" stroke-width="1.5"/><rect x="557" y="998.2" width="116.6" height="1.8" fill="#161616"/><rect x="680" y="978.6" width="109.5" height="29.2" fill="#e2e2e2" stroke="#b5b5b5" stroke-width="1.4"/><rect x="709" y="982.1" width="66" height="22.2" fill="#d4d4d4" stroke="#bdbdbd" stroke-width="1"/><path d="M776.5 980.6V1005.8M783 980.6V1005.8" stroke="#c2c2c2" stroke-width="1.3"/><rect x="729" y="988.9" width="31.4" height="7.8" fill="#3e9f6c" stroke="#151515" stroke-width="1.5"/><rect x="719.5" y="1001.4" width="4.4" height="4.6" rx="2.3" fill="#6a6a6a" stroke="#2c2c2c" stroke-width="0.8"/><rect x="727" y="1001.4" width="4.4" height="4.6" rx="2.3" fill="#6a6a6a" stroke="#2c2c2c" stroke-width="0.8"/><rect x="737" y="1001.4" width="6.4" height="4.6" rx="2.3" fill="#6a6a6a" stroke="#2c2c2c" stroke-width="0.8"/><rect x="745" y="1001.4" width="6.4" height="4.6" rx="2.3" fill="#6a6a6a" stroke="#2c2c2c" stroke-width="0.8"/><rect x="756" y="1001.4" width="6.4" height="4.6" rx="2.3" fill="#6a6a6a" stroke="#2c2c2c" stroke-width="0.8"/><rect x="764" y="1001.4" width="6.4" height="4.6" rx="2.3" fill="#6a6a6a" stroke="#2c2c2c" stroke-width="0.8"/><path d="M557 1017.0H790" stroke="#a9a9a9" stroke-width="1.4"/><rect x="543.1" y="1025.3" width="261" height="1.6" fill="#8d8d8d"/><rect x="804.1" y="973.64" width="1.4" height="53.28" fill="#111"/><rect x="805.5" y="973.64" width="14.5" height="53.28" fill="url(#gEar)"/><ellipse cx="812.8" cy="977.9" rx="2.1" ry="2.8" fill="#d9d9d9" stroke="#2b2b2b" stroke-width="1.3"/><ellipse cx="812.8" cy="996.0" rx="2.1" ry="2.8" fill="#d9d9d9" stroke="#2b2b2b" stroke-width="1.3"/><ellipse cx="812.8" cy="1004.5" rx="2.1" ry="2.8" fill="#d9d9d9" stroke="#2b2b2b" stroke-width="1.3"/><ellipse cx="812.8" cy="1022.7" rx="2.1" ry="2.8" fill="#d9d9d9" stroke="#2b2b2b" stroke-width="1.3"/><rect x="527" y="1026.92" width="14.5" height="26.64" fill="url(#gEar)"/><ellipse cx="534.3" cy="1028.5" rx="2.1" ry="2.1" fill="#d9d9d9" stroke="#2b2b2b" stroke-width="1.3"/><ellipse cx="534.3" cy="1038.9" rx="2.1" ry="2.1" fill="#d9d9d9" stroke="#2b2b2b" stroke-width="1.3"/><ellipse cx="534.3" cy="1052.0" rx="2.1" ry="2.1" fill="#d9d9d9" stroke="#2b2b2b" stroke-width="1.3"/><path d="M527 1040.2H541.5" stroke="#555" stroke-width="0.8"/><rect x="541.5" y="1026.92" width="1.6" height="26.64" fill="#111"/><rect x="543.1" y="1026.92" width="261" height="26.64" fill="url(#gSilv)"/><rect x="543.1" y="1026.92" width="261" height="26.64" fill="url(#gSilvH)"/><rect x="543.1" y="1026.92" width="261" height="1.2" fill="#a0a0a0"/><rect x="557" y="1029.6" width="116.6" height="5.0" fill="url(#gSlot)" stroke="#1a1a1a" stroke-width="1.1"/><rect x="557" y="1029.6" width="116.6" height="1.4" fill="#161616"/><rect x="557" y="1039.3" width="116.6" height="5.0" fill="url(#gSlot)" stroke="#1a1a1a" stroke-width="1.1"/><rect x="557" y="1039.3" width="116.6" height="1.1" fill="#161616"/><rect x="680" y="1028.5" width="109.5" height="15.4" fill="#e2e2e2" stroke="#b5b5b5" stroke-width="1.4"/><rect x="709" y="1030.0" width="66" height="12.4" fill="#d4d4d4" stroke="#bdbdbd" stroke-width="1"/><path d="M776.5 1030.5V1041.9M783 1030.5V1041.9" stroke="#c2c2c2" stroke-width="1.3"/><rect x="729" y="1033.8" width="31.4" height="4.0" fill="#3e9f6c" stroke="#151515" stroke-width="1"/><rect x="719.5" y="1040.5" width="4.4" height="2.6" rx="1.3" fill="#6a6a6a" stroke="#2c2c2c" stroke-width="0.8"/><rect x="727" y="1040.5" width="4.4" height="2.6" rx="1.3" fill="#6a6a6a" stroke="#2c2c2c" stroke-width="0.8"/><rect x="737" y="1040.5" width="6.4" height="2.6" rx="1.3" fill="#6a6a6a" stroke="#2c2c2c" stroke-width="0.8"/><rect x="745" y="1040.5" width="6.4" height="2.6" rx="1.3" fill="#6a6a6a" stroke="#2c2c2c" stroke-width="0.8"/><rect x="756" y="1040.5" width="6.4" height="2.6" rx="1.3" fill="#6a6a6a" stroke="#2c2c2c" stroke-width="0.8"/><rect x="764" y="1040.5" width="6.4" height="2.6" rx="1.3" fill="#6a6a6a" stroke="#2c2c2c" stroke-width="0.8"/><path d="M557 1048.9H790" stroke="#a9a9a9" stroke-width="1"/><rect x="543.1" y="1052.0" width="261" height="1.6" fill="#8d8d8d"/><rect x="804.1" y="1026.92" width="1.4" height="26.64" fill="#111"/><rect x="805.5" y="1026.92" width="14.5" height="26.64" fill="url(#gEar)"/><ellipse cx="812.8" cy="1028.5" rx="2.1" ry="2.1" fill="#d9d9d9" stroke="#2b2b2b" stroke-width="1.3"/><ellipse cx="812.8" cy="1038.9" rx="2.1" ry="2.1" fill="#d9d9d9" stroke="#2b2b2b" stroke-width="1.3"/><ellipse cx="812.8" cy="1052.0" rx="2.1" ry="2.1" fill="#d9d9d9" stroke="#2b2b2b" stroke-width="1.3"/><use href="#chassis" x="527" y="1053.6"/><use href="#chassis" x="929.7" y="1053.6"/><g transform="translate(527,1320.26)"><defs>
<pattern id="pPsuMesh" width="4.42" height="4.42" patternUnits="userSpaceOnUse"><rect width="4.42" height="4.42" fill="#3b4655"/><rect x="0.7" y="0.7" width="3" height="3" fill="#0b0d10"/></pattern>
<linearGradient id="gCard" x1="0" y1="0" x2="0" y2="1"><stop offset="0" stop-color="#5d6774"/><stop offset="0.55" stop-color="#4f5966"/><stop offset="0.85" stop-color="#414b57"/><stop offset="1" stop-color="#7b8490"/></linearGradient>
<radialGradient id="gScrew" cx="0.4" cy="0.35" r="0.7"><stop offset="0" stop-color="#ffffff"/><stop offset="0.6" stop-color="#d9d9d9"/><stop offset="1" stop-color="#8d8d8d"/></radialGradient>
<linearGradient id="gHnd" x1="0" y1="0" x2="1" y2="1"><stop offset="0" stop-color="#3a3a3a"/><stop offset="0.5" stop-color="#0a0a0a"/><stop offset="1" stop-color="#000"/></linearGradient>
<g id="psu">
 <rect x="0" y="0" width="140" height="82" rx="5" fill="#343e4d" stroke="#2a323e" stroke-width="1.6"/>
 <rect x="2.4" y="2.4" width="135.2" height="77.2" rx="4" fill="#3d4858"/>
 <circle cx="18.5" cy="5.6" r="4.1" fill="url(#gScrew)"/><circle cx="121" cy="5.6" r="4.1" fill="url(#gScrew)"/>
 <circle cx="10" cy="9.6" r="1.4" fill="#15191f"/><circle cx="130" cy="9.6" r="1.4" fill="#15191f"/>
 <path d="M36 3.4H100M32 6.2H106M46 9H90" stroke="#6f7c8c" stroke-width="0.7" stroke-dasharray="3 1.2"/>
 <polygon points="62,13 128,13 128,24 133,24 133,58 128,58 128,76 66,76 66,64 44,64 44,44 48,44 48,30 54,30 54,20 62,20" fill="url(#pPsuMesh)"/>
 <rect x="4.3" y="12.6" width="34.4" height="19.2" rx="2.6" fill="#0c0e11"/><rect x="7" y="15.4" width="29" height="13.6" rx="2" fill="#1c1f24"/><rect x="34" y="26" width="3.4" height="3.4" fill="#cfcfcf"/>
 <rect x="8" y="34.8" width="26.4" height="8" rx="1" fill="#1a1e24"/><rect x="11" y="36.4" width="20" height="4.8" fill="#2b313a"/><path d="M16 38.8H25" stroke="#7e8793" stroke-width="1"/>
 <rect x="8" y="45" width="26.4" height="8.6" rx="1" fill="#1a1e24"/><rect x="11" y="46.8" width="20" height="5" fill="#2b313a"/><path d="M16 49.4H25" stroke="#7e8793" stroke-width="1"/>
 <rect x="4.3" y="56" width="34.4" height="19.6" rx="2.6" fill="#0c0e11"/><rect x="7" y="58.8" width="29" height="13.8" rx="2" fill="#1c1f24"/><rect x="34" y="66" width="3.4" height="3.4" fill="#cfcfcf"/>
 <circle cx="42.7" cy="18.8" r="1.7" fill="#e02626"/><circle cx="42.7" cy="23.6" r="1.7" fill="#2fc54a"/><circle cx="42.7" cy="34" r="1.7" fill="#2fc54a"/><circle cx="42.7" cy="46" r="1.7" fill="#2fc54a"/>
 <path d="M114 19.5L58.5 66.5" stroke="#050505" stroke-width="7.4" stroke-linecap="round"/>
 <path d="M112 19.5L60 63.6" stroke="#3b3b3b" stroke-width="1.6" stroke-linecap="round"/>
 <circle cx="115" cy="18.6" r="3.6" fill="#cfcfcf"/><circle cx="58" cy="67" r="3" fill="#161616" stroke="#3a3a3a" stroke-width="1"/>
 <rect x="108" y="65.6" width="19.6" height="10.4" fill="#a7d9ad"/><rect x="108" y="65.6" width="19.6" height="5" fill="#6fb87c"/>
 <path d="M110.4 65V69M115.2 65V69M120 65V69M124.8 65V69" stroke="#d8c9a8" stroke-width="2.2"/>
 <circle cx="131" cy="76" r="1.3" fill="#15191f"/>
</g>
<g id="lcard">
 <rect x="0" y="0" width="258" height="17.3" fill="url(#gCard)"/>
 <path d="M0 15.6C60 17.6 40 13.4 129 13.4C218 13.4 198 17.6 258 15.6" stroke="#97a2b1" stroke-width="1.1" fill="none" opacity="0.8"/>
 <rect x="0" y="0" width="258" height="1" fill="#3b4656"/>
 <circle cx="6.6" cy="8.3" r="4.1" fill="url(#gScrew)"/>
</g>
</defs><rect x="0" y="0" width="294" height="270" fill="#475467"/><rect x="0" y="0" width="294" height="1.4" fill="#6c7888"/><use href="#psu" x="5" y="4.6"/><use href="#psu" x="148.6" y="4.6"/><rect x="0" y="86.6" width="294" height="9.2" fill="#3f4b5c"/><circle cx="4.5" cy="91.4" r="1.5" fill="#1d232c"/><circle cx="19" cy="91.4" r="1.5" fill="#1d232c"/><circle cx="50" cy="91.4" r="1.5" fill="#1d232c"/><circle cx="94" cy="91.4" r="1.5" fill="#1d232c"/><circle cx="156" cy="91.4" r="1.5" fill="#1d232c"/><circle cx="182" cy="91.4" r="1.5" fill="#1d232c"/><circle cx="230" cy="91.4" r="1.5" fill="#1d232c"/><circle cx="282" cy="91.4" r="1.5" fill="#1d232c"/><rect x="55" y="87" width="29" height="8.4" fill="#d8bd2e"/><path d="M57 89.6H82M57 92.8H82" stroke="#f0e08a" stroke-width="1" stroke-dasharray="6 2"/><circle cx="146.3" cy="90.8" r="3.2" fill="url(#gScrew)"/><rect x="0" y="95.8" width="24" height="175" fill="#3b4655"/><rect x="23.4" y="95.8" width="1.4" height="175" fill="#2f3947"/><circle cx="12" cy="100.6" r="4.4" fill="url(#gScrew)"/><rect x="8" y="191" width="8.4" height="60" fill="#1d222b"/><use href="#lcard" x="24.8" y="96.3"/><rect x="57.7" y="99.5" width="47.6" height="6" rx="1.6" fill="none" stroke="#8e9aaa" stroke-width="0.8" opacity="0.8"/><rect x="110.3" y="99.5" width="47.6" height="6" rx="1.6" fill="none" stroke="#8e9aaa" stroke-width="0.8" opacity="0.8"/><rect x="162.9" y="99.5" width="47.6" height="6" rx="1.6" fill="none" stroke="#8e9aaa" stroke-width="0.8" opacity="0.8"/><rect x="215.4" y="99.5" width="47.6" height="6" rx="1.6" fill="none" stroke="#8e9aaa" stroke-width="0.8" opacity="0.8"/><rect x="60.7" y="103.9" width="9.2" height="5.6" rx="1" fill="#6b7686" opacity="0.55"/><rect x="61.8" y="105.0" width="7" height="3.5" fill="#050607"/><rect x="78.3" y="103.9" width="9.2" height="5.6" rx="1" fill="#6b7686" opacity="0.55"/><rect x="79.4" y="105.0" width="7" height="3.5" fill="#050607"/><rect x="96.0" y="103.9" width="9.2" height="5.6" rx="1" fill="#6b7686" opacity="0.55"/><rect x="97.1" y="105.0" width="7" height="3.5" fill="#050607"/><rect x="113.3" y="103.9" width="9.2" height="5.6" rx="1" fill="#6b7686" opacity="0.55"/><rect x="114.4" y="105.0" width="7" height="3.5" fill="#050607"/><rect x="131.3" y="103.9" width="9.2" height="5.6" rx="1" fill="#6b7686" opacity="0.55"/><rect x="132.4" y="105.0" width="7" height="3.5" fill="#050607"/><rect x="149.3" y="103.9" width="9.2" height="5.6" rx="1" fill="#6b7686" opacity="0.55"/><rect x="150.4" y="105.0" width="7" height="3.5" fill="#050607"/><rect x="165.9" y="103.9" width="9.2" height="5.6" rx="1" fill="#6b7686" opacity="0.55"/><rect x="167.0" y="105.0" width="7" height="3.5" fill="#050607"/><rect x="183.2" y="103.9" width="9.2" height="5.6" rx="1" fill="#6b7686" opacity="0.55"/><rect x="184.3" y="105.0" width="7" height="3.5" fill="#050607"/><rect x="201.1" y="103.9" width="9.2" height="5.6" rx="1" fill="#6b7686" opacity="0.55"/><rect x="202.2" y="105.0" width="7" height="3.5" fill="#050607"/><rect x="218.4" y="103.9" width="9.2" height="5.6" rx="1" fill="#6b7686" opacity="0.55"/><rect x="219.5" y="105.0" width="7" height="3.5" fill="#050607"/><rect x="236.4" y="103.9" width="9.2" height="5.6" rx="1" fill="#6b7686" opacity="0.55"/><rect x="237.5" y="105.0" width="7" height="3.5" fill="#050607"/><rect x="254.4" y="103.9" width="9.2" height="5.6" rx="1" fill="#6b7686" opacity="0.55"/><rect x="255.5" y="105.0" width="7" height="3.5" fill="#050607"/><use href="#lcard" x="24.8" y="113.6"/><rect x="57.7" y="116.8" width="47.6" height="6" rx="1.6" fill="none" stroke="#8e9aaa" stroke-width="0.8" opacity="0.8"/><rect x="110.3" y="116.8" width="47.6" height="6" rx="1.6" fill="none" stroke="#8e9aaa" stroke-width="0.8" opacity="0.8"/><rect x="162.9" y="116.8" width="47.6" height="6" rx="1.6" fill="none" stroke="#8e9aaa" stroke-width="0.8" opacity="0.8"/><rect x="215.4" y="116.8" width="47.6" height="6" rx="1.6" fill="none" stroke="#8e9aaa" stroke-width="0.8" opacity="0.8"/><rect x="60.7" y="121.2" width="9.2" height="5.6" rx="1" fill="#6b7686" opacity="0.55"/><rect x="61.8" y="122.3" width="7" height="3.5" fill="#050607"/><rect x="78.3" y="121.2" width="9.2" height="5.6" rx="1" fill="#6b7686" opacity="0.55"/><rect x="79.4" y="122.3" width="7" height="3.5" fill="#050607"/><rect x="96.0" y="121.2" width="9.2" height="5.6" rx="1" fill="#6b7686" opacity="0.55"/><rect x="97.1" y="122.3" width="7" height="3.5" fill="#050607"/><rect x="113.3" y="121.2" width="9.2" height="5.6" rx="1" fill="#6b7686" opacity="0.55"/><rect x="114.4" y="122.3" width="7" height="3.5" fill="#050607"/><rect x="131.3" y="121.2" width="9.2" height="5.6" rx="1" fill="#6b7686" opacity="0.55"/><rect x="132.4" y="122.3" width="7" height="3.5" fill="#050607"/><rect x="149.3" y="121.2" width="9.2" height="5.6" rx="1" fill="#6b7686" opacity="0.55"/><rect x="150.4" y="122.3" width="7" height="3.5" fill="#050607"/><rect x="165.9" y="121.2" width="9.2" height="5.6" rx="1" fill="#6b7686" opacity="0.55"/><rect x="167.0" y="122.3" width="7" height="3.5" fill="#050607"/><rect x="183.2" y="121.2" width="9.2" height="5.6" rx="1" fill="#6b7686" opacity="0.55"/><rect x="184.3" y="122.3" width="7" height="3.5" fill="#050607"/><rect x="201.1" y="121.2" width="9.2" height="5.6" rx="1" fill="#6b7686" opacity="0.55"/><rect x="202.2" y="122.3" width="7" height="3.5" fill="#050607"/><rect x="218.4" y="121.2" width="9.2" height="5.6" rx="1" fill="#6b7686" opacity="0.55"/><rect x="219.5" y="122.3" width="7" height="3.5" fill="#050607"/><rect x="236.4" y="121.2" width="9.2" height="5.6" rx="1" fill="#6b7686" opacity="0.55"/><rect x="237.5" y="122.3" width="7" height="3.5" fill="#050607"/><rect x="254.4" y="121.2" width="9.2" height="5.6" rx="1" fill="#6b7686" opacity="0.55"/><rect x="255.5" y="122.3" width="7" height="3.5" fill="#050607"/><use href="#lcard" x="24.8" y="130.9"/><rect x="57.7" y="134.1" width="47.6" height="6" rx="1.6" fill="none" stroke="#8e9aaa" stroke-width="0.8" opacity="0.8"/><rect x="110.3" y="134.1" width="47.6" height="6" rx="1.6" fill="none" stroke="#8e9aaa" stroke-width="0.8" opacity="0.8"/><rect x="162.9" y="134.1" width="47.6" height="6" rx="1.6" fill="none" stroke="#8e9aaa" stroke-width="0.8" opacity="0.8"/><rect x="215.4" y="134.1" width="47.6" height="6" rx="1.6" fill="none" stroke="#8e9aaa" stroke-width="0.8" opacity="0.8"/><rect x="60.7" y="138.5" width="9.2" height="5.6" rx="1" fill="#6b7686" opacity="0.55"/><rect x="61.8" y="139.6" width="7" height="3.5" fill="#050607"/><rect x="78.3" y="138.5" width="9.2" height="5.6" rx="1" fill="#6b7686" opacity="0.55"/><rect x="79.4" y="139.6" width="7" height="3.5" fill="#050607"/><rect x="96.0" y="138.5" width="9.2" height="5.6" rx="1" fill="#6b7686" opacity="0.55"/><rect x="97.1" y="139.6" width="7" height="3.5" fill="#050607"/><rect x="113.3" y="138.5" width="9.2" height="5.6" rx="1" fill="#6b7686" opacity="0.55"/><rect x="114.4" y="139.6" width="7" height="3.5" fill="#050607"/><rect x="131.3" y="138.5" width="9.2" height="5.6" rx="1" fill="#6b7686" opacity="0.55"/><rect x="132.4" y="139.6" width="7" height="3.5" fill="#050607"/><rect x="149.3" y="138.5" width="9.2" height="5.6" rx="1" fill="#6b7686" opacity="0.55"/><rect x="150.4" y="139.6" width="7" height="3.5" fill="#050607"/><rect x="165.9" y="138.5" width="9.2" height="5.6" rx="1" fill="#6b7686" opacity="0.55"/><rect x="167.0" y="139.6" width="7" height="3.5" fill="#050607"/><rect x="183.2" y="138.5" width="9.2" height="5.6" rx="1" fill="#6b7686" opacity="0.55"/><rect x="184.3" y="139.6" width="7" height="3.5" fill="#050607"/><rect x="201.1" y="138.5" width="9.2" height="5.6" rx="1" fill="#6b7686" opacity="0.55"/><rect x="202.2" y="139.6" width="7" height="3.5" fill="#050607"/><rect x="218.4" y="138.5" width="9.2" height="5.6" rx="1" fill="#6b7686" opacity="0.55"/><rect x="219.5" y="139.6" width="7" height="3.5" fill="#050607"/><rect x="236.4" y="138.5" width="9.2" height="5.6" rx="1" fill="#6b7686" opacity="0.55"/><rect x="237.5" y="139.6" width="7" height="3.5" fill="#050607"/><rect x="254.4" y="138.5" width="9.2" height="5.6" rx="1" fill="#6b7686" opacity="0.55"/><rect x="255.5" y="139.6" width="7" height="3.5" fill="#050607"/><use href="#lcard" x="24.8" y="148.2"/><rect x="57.7" y="151.4" width="47.6" height="6" rx="1.6" fill="none" stroke="#8e9aaa" stroke-width="0.8" opacity="0.8"/><rect x="110.3" y="151.4" width="47.6" height="6" rx="1.6" fill="none" stroke="#8e9aaa" stroke-width="0.8" opacity="0.8"/><rect x="162.9" y="151.4" width="47.6" height="6" rx="1.6" fill="none" stroke="#8e9aaa" stroke-width="0.8" opacity="0.8"/><rect x="215.4" y="151.4" width="47.6" height="6" rx="1.6" fill="none" stroke="#8e9aaa" stroke-width="0.8" opacity="0.8"/><rect x="60.7" y="155.8" width="9.2" height="5.6" rx="1" fill="#6b7686" opacity="0.55"/><rect x="61.8" y="156.9" width="7" height="3.5" fill="#050607"/><rect x="78.3" y="155.8" width="9.2" height="5.6" rx="1" fill="#6b7686" opacity="0.55"/><rect x="79.4" y="156.9" width="7" height="3.5" fill="#050607"/><rect x="96.0" y="155.8" width="9.2" height="5.6" rx="1" fill="#6b7686" opacity="0.55"/><rect x="97.1" y="156.9" width="7" height="3.5" fill="#050607"/><rect x="113.3" y="155.8" width="9.2" height="5.6" rx="1" fill="#6b7686" opacity="0.55"/><rect x="114.4" y="156.9" width="7" height="3.5" fill="#050607"/><rect x="131.3" y="155.8" width="9.2" height="5.6" rx="1" fill="#6b7686" opacity="0.55"/><rect x="132.4" y="156.9" width="7" height="3.5" fill="#050607"/><rect x="149.3" y="155.8" width="9.2" height="5.6" rx="1" fill="#6b7686" opacity="0.55"/><rect x="150.4" y="156.9" width="7" height="3.5" fill="#050607"/><rect x="165.9" y="155.8" width="9.2" height="5.6" rx="1" fill="#6b7686" opacity="0.55"/><rect x="167.0" y="156.9" width="7" height="3.5" fill="#050607"/><rect x="183.2" y="155.8" width="9.2" height="5.6" rx="1" fill="#6b7686" opacity="0.55"/><rect x="184.3" y="156.9" width="7" height="3.5" fill="#050607"/><rect x="201.1" y="155.8" width="9.2" height="5.6" rx="1" fill="#6b7686" opacity="0.55"/><rect x="202.2" y="156.9" width="7" height="3.5" fill="#050607"/><rect x="218.4" y="155.8" width="9.2" height="5.6" rx="1" fill="#6b7686" opacity="0.55"/><rect x="219.5" y="156.9" width="7" height="3.5" fill="#050607"/><rect x="236.4" y="155.8" width="9.2" height="5.6" rx="1" fill="#6b7686" opacity="0.55"/><rect x="237.5" y="156.9" width="7" height="3.5" fill="#050607"/><rect x="254.4" y="155.8" width="9.2" height="5.6" rx="1" fill="#6b7686" opacity="0.55"/><rect x="255.5" y="156.9" width="7" height="3.5" fill="#050607"/><use href="#lcard" x="24.8" y="165.5"/><rect x="57.7" y="168.7" width="47.6" height="6" rx="1.6" fill="none" stroke="#8e9aaa" stroke-width="0.8" opacity="0.8"/><rect x="110.3" y="168.7" width="47.6" height="6" rx="1.6" fill="none" stroke="#8e9aaa" stroke-width="0.8" opacity="0.8"/><rect x="162.9" y="168.7" width="47.6" height="6" rx="1.6" fill="none" stroke="#8e9aaa" stroke-width="0.8" opacity="0.8"/><rect x="215.4" y="168.7" width="47.6" height="6" rx="1.6" fill="none" stroke="#8e9aaa" stroke-width="0.8" opacity="0.8"/><rect x="60.7" y="173.1" width="9.2" height="5.6" rx="1" fill="#6b7686" opacity="0.55"/><rect x="61.8" y="174.2" width="7" height="3.5" fill="#050607"/><rect x="78.3" y="173.1" width="9.2" height="5.6" rx="1" fill="#6b7686" opacity="0.55"/><rect x="79.4" y="174.2" width="7" height="3.5" fill="#050607"/><rect x="96.0" y="173.1" width="9.2" height="5.6" rx="1" fill="#6b7686" opacity="0.55"/><rect x="97.1" y="174.2" width="7" height="3.5" fill="#050607"/><rect x="113.3" y="173.1" width="9.2" height="5.6" rx="1" fill="#6b7686" opacity="0.55"/><rect x="114.4" y="174.2" width="7" height="3.5" fill="#050607"/><rect x="131.3" y="173.1" width="9.2" height="5.6" rx="1" fill="#6b7686" opacity="0.55"/><rect x="132.4" y="174.2" width="7" height="3.5" fill="#050607"/><rect x="149.3" y="173.1" width="9.2" height="5.6" rx="1" fill="#6b7686" opacity="0.55"/><rect x="150.4" y="174.2" width="7" height="3.5" fill="#050607"/><rect x="165.9" y="173.1" width="9.2" height="5.6" rx="1" fill="#6b7686" opacity="0.55"/><rect x="167.0" y="174.2" width="7" height="3.5" fill="#050607"/><rect x="183.2" y="173.1" width="9.2" height="5.6" rx="1" fill="#6b7686" opacity="0.55"/><rect x="184.3" y="174.2" width="7" height="3.5" fill="#050607"/><rect x="201.1" y="173.1" width="9.2" height="5.6" rx="1" fill="#6b7686" opacity="0.55"/><rect x="202.2" y="174.2" width="7" height="3.5" fill="#050607"/><rect x="218.4" y="173.1" width="9.2" height="5.6" rx="1" fill="#6b7686" opacity="0.55"/><rect x="219.5" y="174.2" width="7" height="3.5" fill="#050607"/><rect x="236.4" y="173.1" width="9.2" height="5.6" rx="1" fill="#6b7686" opacity="0.55"/><rect x="237.5" y="174.2" width="7" height="3.5" fill="#050607"/><rect x="254.4" y="173.1" width="9.2" height="5.6" rx="1" fill="#6b7686" opacity="0.55"/><rect x="255.5" y="174.2" width="7" height="3.5" fill="#050607"/><use href="#lcard" x="24.8" y="182.8"/><rect x="57.7" y="186.0" width="47.6" height="6" rx="1.6" fill="none" stroke="#8e9aaa" stroke-width="0.8" opacity="0.8"/><rect x="110.3" y="186.0" width="47.6" height="6" rx="1.6" fill="none" stroke="#8e9aaa" stroke-width="0.8" opacity="0.8"/><rect x="162.9" y="186.0" width="47.6" height="6" rx="1.6" fill="none" stroke="#8e9aaa" stroke-width="0.8" opacity="0.8"/><rect x="215.4" y="186.0" width="47.6" height="6" rx="1.6" fill="none" stroke="#8e9aaa" stroke-width="0.8" opacity="0.8"/><rect x="60.7" y="190.4" width="9.2" height="5.6" rx="1" fill="#6b7686" opacity="0.55"/><rect x="61.8" y="191.5" width="7" height="3.5" fill="#050607"/><rect x="78.3" y="190.4" width="9.2" height="5.6" rx="1" fill="#6b7686" opacity="0.55"/><rect x="79.4" y="191.5" width="7" height="3.5" fill="#050607"/><rect x="96.0" y="190.4" width="9.2" height="5.6" rx="1" fill="#6b7686" opacity="0.55"/><rect x="97.1" y="191.5" width="7" height="3.5" fill="#050607"/><rect x="113.3" y="190.4" width="9.2" height="5.6" rx="1" fill="#6b7686" opacity="0.55"/><rect x="114.4" y="191.5" width="7" height="3.5" fill="#050607"/><rect x="131.3" y="190.4" width="9.2" height="5.6" rx="1" fill="#6b7686" opacity="0.55"/><rect x="132.4" y="191.5" width="7" height="3.5" fill="#050607"/><rect x="149.3" y="190.4" width="9.2" height="5.6" rx="1" fill="#6b7686" opacity="0.55"/><rect x="150.4" y="191.5" width="7" height="3.5" fill="#050607"/><rect x="165.9" y="190.4" width="9.2" height="5.6" rx="1" fill="#6b7686" opacity="0.55"/><rect x="167.0" y="191.5" width="7" height="3.5" fill="#050607"/><rect x="183.2" y="190.4" width="9.2" height="5.6" rx="1" fill="#6b7686" opacity="0.55"/><rect x="184.3" y="191.5" width="7" height="3.5" fill="#050607"/><rect x="201.1" y="190.4" width="9.2" height="5.6" rx="1" fill="#6b7686" opacity="0.55"/><rect x="202.2" y="191.5" width="7" height="3.5" fill="#050607"/><rect x="218.4" y="190.4" width="9.2" height="5.6" rx="1" fill="#6b7686" opacity="0.55"/><rect x="219.5" y="191.5" width="7" height="3.5" fill="#050607"/><rect x="236.4" y="190.4" width="9.2" height="5.6" rx="1" fill="#6b7686" opacity="0.55"/><rect x="237.5" y="191.5" width="7" height="3.5" fill="#050607"/><rect x="254.4" y="190.4" width="9.2" height="5.6" rx="1" fill="#6b7686" opacity="0.55"/><rect x="255.5" y="191.5" width="7" height="3.5" fill="#050607"/><use href="#lcard" x="24.8" y="200.1"/><rect x="57.7" y="203.3" width="47.6" height="6" rx="1.6" fill="none" stroke="#8e9aaa" stroke-width="0.8" opacity="0.8"/><rect x="110.3" y="203.3" width="47.6" height="6" rx="1.6" fill="none" stroke="#8e9aaa" stroke-width="0.8" opacity="0.8"/><rect x="162.9" y="203.3" width="47.6" height="6" rx="1.6" fill="none" stroke="#8e9aaa" stroke-width="0.8" opacity="0.8"/><rect x="215.4" y="203.3" width="47.6" height="6" rx="1.6" fill="none" stroke="#8e9aaa" stroke-width="0.8" opacity="0.8"/><rect x="60.7" y="207.7" width="9.2" height="5.6" rx="1" fill="#6b7686" opacity="0.55"/><rect x="61.8" y="208.8" width="7" height="3.5" fill="#050607"/><rect x="78.3" y="207.7" width="9.2" height="5.6" rx="1" fill="#6b7686" opacity="0.55"/><rect x="79.4" y="208.8" width="7" height="3.5" fill="#050607"/><rect x="96.0" y="207.7" width="9.2" height="5.6" rx="1" fill="#6b7686" opacity="0.55"/><rect x="97.1" y="208.8" width="7" height="3.5" fill="#050607"/><rect x="113.3" y="207.7" width="9.2" height="5.6" rx="1" fill="#6b7686" opacity="0.55"/><rect x="114.4" y="208.8" width="7" height="3.5" fill="#050607"/><rect x="131.3" y="207.7" width="9.2" height="5.6" rx="1" fill="#6b7686" opacity="0.55"/><rect x="132.4" y="208.8" width="7" height="3.5" fill="#050607"/><rect x="149.3" y="207.7" width="9.2" height="5.6" rx="1" fill="#6b7686" opacity="0.55"/><rect x="150.4" y="208.8" width="7" height="3.5" fill="#050607"/><rect x="165.9" y="207.7" width="9.2" height="5.6" rx="1" fill="#6b7686" opacity="0.55"/><rect x="167.0" y="208.8" width="7" height="3.5" fill="#050607"/><rect x="183.2" y="207.7" width="9.2" height="5.6" rx="1" fill="#6b7686" opacity="0.55"/><rect x="184.3" y="208.8" width="7" height="3.5" fill="#050607"/><rect x="201.1" y="207.7" width="9.2" height="5.6" rx="1" fill="#6b7686" opacity="0.55"/><rect x="202.2" y="208.8" width="7" height="3.5" fill="#050607"/><rect x="218.4" y="207.7" width="9.2" height="5.6" rx="1" fill="#6b7686" opacity="0.55"/><rect x="219.5" y="208.8" width="7" height="3.5" fill="#050607"/><rect x="236.4" y="207.7" width="9.2" height="5.6" rx="1" fill="#6b7686" opacity="0.55"/><rect x="237.5" y="208.8" width="7" height="3.5" fill="#050607"/><rect x="254.4" y="207.7" width="9.2" height="5.6" rx="1" fill="#6b7686" opacity="0.55"/><rect x="255.5" y="208.8" width="7" height="3.5" fill="#050607"/><use href="#lcard" x="24.8" y="217.4"/><rect x="57.7" y="220.6" width="47.6" height="6" rx="1.6" fill="none" stroke="#8e9aaa" stroke-width="0.8" opacity="0.8"/><rect x="110.3" y="220.6" width="47.6" height="6" rx="1.6" fill="none" stroke="#8e9aaa" stroke-width="0.8" opacity="0.8"/><rect x="162.9" y="220.6" width="47.6" height="6" rx="1.6" fill="none" stroke="#8e9aaa" stroke-width="0.8" opacity="0.8"/><rect x="215.4" y="220.6" width="47.6" height="6" rx="1.6" fill="none" stroke="#8e9aaa" stroke-width="0.8" opacity="0.8"/><rect x="60.7" y="225.0" width="9.2" height="5.6" rx="1" fill="#6b7686" opacity="0.55"/><rect x="61.8" y="226.1" width="7" height="3.5" fill="#050607"/><rect x="78.3" y="225.0" width="9.2" height="5.6" rx="1" fill="#6b7686" opacity="0.55"/><rect x="79.4" y="226.1" width="7" height="3.5" fill="#050607"/><rect x="96.0" y="225.0" width="9.2" height="5.6" rx="1" fill="#6b7686" opacity="0.55"/><rect x="97.1" y="226.1" width="7" height="3.5" fill="#050607"/><rect x="113.3" y="225.0" width="9.2" height="5.6" rx="1" fill="#6b7686" opacity="0.55"/><rect x="114.4" y="226.1" width="7" height="3.5" fill="#050607"/><rect x="131.3" y="225.0" width="9.2" height="5.6" rx="1" fill="#6b7686" opacity="0.55"/><rect x="132.4" y="226.1" width="7" height="3.5" fill="#050607"/><rect x="149.3" y="225.0" width="9.2" height="5.6" rx="1" fill="#6b7686" opacity="0.55"/><rect x="150.4" y="226.1" width="7" height="3.5" fill="#050607"/><rect x="165.9" y="225.0" width="9.2" height="5.6" rx="1" fill="#6b7686" opacity="0.55"/><rect x="167.0" y="226.1" width="7" height="3.5" fill="#050607"/><rect x="183.2" y="225.0" width="9.2" height="5.6" rx="1" fill="#6b7686" opacity="0.55"/><rect x="184.3" y="226.1" width="7" height="3.5" fill="#050607"/><rect x="201.1" y="225.0" width="9.2" height="5.6" rx="1" fill="#6b7686" opacity="0.55"/><rect x="202.2" y="226.1" width="7" height="3.5" fill="#050607"/><rect x="218.4" y="225.0" width="9.2" height="5.6" rx="1" fill="#6b7686" opacity="0.55"/><rect x="219.5" y="226.1" width="7" height="3.5" fill="#050607"/><rect x="236.4" y="225.0" width="9.2" height="5.6" rx="1" fill="#6b7686" opacity="0.55"/><rect x="237.5" y="226.1" width="7" height="3.5" fill="#050607"/><rect x="254.4" y="225.0" width="9.2" height="5.6" rx="1" fill="#6b7686" opacity="0.55"/><rect x="255.5" y="226.1" width="7" height="3.5" fill="#050607"/><use href="#lcard" x="24.8" y="234.7"/><rect x="57.7" y="237.9" width="47.6" height="6" rx="1.6" fill="none" stroke="#8e9aaa" stroke-width="0.8" opacity="0.8"/><rect x="110.3" y="237.9" width="47.6" height="6" rx="1.6" fill="none" stroke="#8e9aaa" stroke-width="0.8" opacity="0.8"/><rect x="162.9" y="237.9" width="47.6" height="6" rx="1.6" fill="none" stroke="#8e9aaa" stroke-width="0.8" opacity="0.8"/><rect x="215.4" y="237.9" width="47.6" height="6" rx="1.6" fill="none" stroke="#8e9aaa" stroke-width="0.8" opacity="0.8"/><rect x="60.7" y="242.3" width="9.2" height="5.6" rx="1" fill="#6b7686" opacity="0.55"/><rect x="61.8" y="243.4" width="7" height="3.5" fill="#050607"/><rect x="78.3" y="242.3" width="9.2" height="5.6" rx="1" fill="#6b7686" opacity="0.55"/><rect x="79.4" y="243.4" width="7" height="3.5" fill="#050607"/><rect x="96.0" y="242.3" width="9.2" height="5.6" rx="1" fill="#6b7686" opacity="0.55"/><rect x="97.1" y="243.4" width="7" height="3.5" fill="#050607"/><rect x="113.3" y="242.3" width="9.2" height="5.6" rx="1" fill="#6b7686" opacity="0.55"/><rect x="114.4" y="243.4" width="7" height="3.5" fill="#050607"/><rect x="131.3" y="242.3" width="9.2" height="5.6" rx="1" fill="#6b7686" opacity="0.55"/><rect x="132.4" y="243.4" width="7" height="3.5" fill="#050607"/><rect x="149.3" y="242.3" width="9.2" height="5.6" rx="1" fill="#6b7686" opacity="0.55"/><rect x="150.4" y="243.4" width="7" height="3.5" fill="#050607"/><rect x="165.9" y="242.3" width="9.2" height="5.6" rx="1" fill="#6b7686" opacity="0.55"/><rect x="167.0" y="243.4" width="7" height="3.5" fill="#050607"/><rect x="183.2" y="242.3" width="9.2" height="5.6" rx="1" fill="#6b7686" opacity="0.55"/><rect x="184.3" y="243.4" width="7" height="3.5" fill="#050607"/><rect x="201.1" y="242.3" width="9.2" height="5.6" rx="1" fill="#6b7686" opacity="0.55"/><rect x="202.2" y="243.4" width="7" height="3.5" fill="#050607"/><rect x="218.4" y="242.3" width="9.2" height="5.6" rx="1" fill="#6b7686" opacity="0.55"/><rect x="219.5" y="243.4" width="7" height="3.5" fill="#050607"/><rect x="236.4" y="242.3" width="9.2" height="5.6" rx="1" fill="#6b7686" opacity="0.55"/><rect x="237.5" y="243.4" width="7" height="3.5" fill="#050607"/><rect x="254.4" y="242.3" width="9.2" height="5.6" rx="1" fill="#6b7686" opacity="0.55"/><rect x="255.5" y="243.4" width="7" height="3.5" fill="#050607"/><use href="#lcard" x="24.8" y="252.0"/><rect x="57.7" y="255.2" width="47.6" height="6" rx="1.6" fill="none" stroke="#8e9aaa" stroke-width="0.8" opacity="0.8"/><rect x="110.3" y="255.2" width="47.6" height="6" rx="1.6" fill="none" stroke="#8e9aaa" stroke-width="0.8" opacity="0.8"/><rect x="162.9" y="255.2" width="47.6" height="6" rx="1.6" fill="none" stroke="#8e9aaa" stroke-width="0.8" opacity="0.8"/><rect x="215.4" y="255.2" width="47.6" height="6" rx="1.6" fill="none" stroke="#8e9aaa" stroke-width="0.8" opacity="0.8"/><rect x="60.7" y="259.6" width="9.2" height="5.6" rx="1" fill="#6b7686" opacity="0.55"/><rect x="61.8" y="260.7" width="7" height="3.5" fill="#050607"/><rect x="78.3" y="259.6" width="9.2" height="5.6" rx="1" fill="#6b7686" opacity="0.55"/><rect x="79.4" y="260.7" width="7" height="3.5" fill="#050607"/><rect x="96.0" y="259.6" width="9.2" height="5.6" rx="1" fill="#6b7686" opacity="0.55"/><rect x="97.1" y="260.7" width="7" height="3.5" fill="#050607"/><rect x="113.3" y="259.6" width="9.2" height="5.6" rx="1" fill="#6b7686" opacity="0.55"/><rect x="114.4" y="260.7" width="7" height="3.5" fill="#050607"/><rect x="131.3" y="259.6" width="9.2" height="5.6" rx="1" fill="#6b7686" opacity="0.55"/><rect x="132.4" y="260.7" width="7" height="3.5" fill="#050607"/><rect x="149.3" y="259.6" width="9.2" height="5.6" rx="1" fill="#6b7686" opacity="0.55"/><rect x="150.4" y="260.7" width="7" height="3.5" fill="#050607"/><rect x="165.9" y="259.6" width="9.2" height="5.6" rx="1" fill="#6b7686" opacity="0.55"/><rect x="167.0" y="260.7" width="7" height="3.5" fill="#050607"/><rect x="183.2" y="259.6" width="9.2" height="5.6" rx="1" fill="#6b7686" opacity="0.55"/><rect x="184.3" y="260.7" width="7" height="3.5" fill="#050607"/><rect x="201.1" y="259.6" width="9.2" height="5.6" rx="1" fill="#6b7686" opacity="0.55"/><rect x="202.2" y="260.7" width="7" height="3.5" fill="#050607"/><rect x="218.4" y="259.6" width="9.2" height="5.6" rx="1" fill="#6b7686" opacity="0.55"/><rect x="219.5" y="260.7" width="7" height="3.5" fill="#050607"/><rect x="236.4" y="259.6" width="9.2" height="5.6" rx="1" fill="#6b7686" opacity="0.55"/><rect x="237.5" y="260.7" width="7" height="3.5" fill="#050607"/><rect x="254.4" y="259.6" width="9.2" height="5.6" rx="1" fill="#6b7686" opacity="0.55"/><rect x="255.5" y="260.7" width="7" height="3.5" fill="#050607"/><rect x="282.6" y="94" width="10.6" height="177" rx="4" fill="#45b673"/><circle cx="287.6" cy="105.5" r="3.9" fill="url(#gScrew)"/><circle cx="287.6" cy="96.9" r="1.5" fill="#e3c532"/><circle cx="287.6" cy="122.8" r="3.9" fill="url(#gScrew)"/><circle cx="287.6" cy="114.2" r="1.5" fill="#e3c532"/><circle cx="287.6" cy="140.1" r="3.9" fill="url(#gScrew)"/><circle cx="287.6" cy="131.5" r="1.5" fill="#e3c532"/><circle cx="287.6" cy="157.4" r="3.9" fill="url(#gScrew)"/><circle cx="287.6" cy="148.8" r="1.5" fill="#e3c532"/><circle cx="287.6" cy="174.7" r="3.9" fill="url(#gScrew)"/><circle cx="287.6" cy="166.1" r="1.5" fill="#e3c532"/><circle cx="287.6" cy="192.0" r="3.9" fill="url(#gScrew)"/><circle cx="287.6" cy="183.4" r="1.5" fill="#e3c532"/><circle cx="287.6" cy="209.3" r="3.9" fill="url(#gScrew)"/><circle cx="287.6" cy="200.7" r="1.5" fill="#e3c532"/><circle cx="287.6" cy="226.6" r="3.9" fill="url(#gScrew)"/><circle cx="287.6" cy="218.0" r="1.5" fill="#e3c532"/><circle cx="287.6" cy="243.9" r="3.9" fill="url(#gScrew)"/><circle cx="287.6" cy="235.3" r="1.5" fill="#e3c532"/><circle cx="287.6" cy="261.2" r="3.9" fill="url(#gScrew)"/><circle cx="287.6" cy="252.6" r="1.5" fill="#e3c532"/></g><g transform="translate(929.7,1320.26)"><defs>
<linearGradient id="gTeal" x1="0" y1="0" x2="1" y2="0"><stop offset="0" stop-color="#48798b"/><stop offset="0.06" stop-color="#4a7d90"/><stop offset="0.35" stop-color="#386575"/><stop offset="0.6" stop-color="#386474"/><stop offset="0.94" stop-color="#508294"/><stop offset="1" stop-color="#487889"/></linearGradient>
<pattern id="pTealMesh" width="3.72" height="3.72" patternUnits="userSpaceOnUse"><rect width="3.72" height="3.72" fill="#2f5866"/><rect x="0.55" y="0.55" width="2.75" height="2.75" fill="#0e161b"/></pattern>
<radialGradient id="gScrewD" cx="0.4" cy="0.35" r="0.7"><stop offset="0" stop-color="#d5d5d5"/><stop offset="0.55" stop-color="#7d7d7d"/><stop offset="1" stop-color="#2b2b2b"/></radialGradient>
<linearGradient id="gTealHnd" x1="0" y1="0" x2="1" y2="0"><stop offset="0" stop-color="#0b0b0b"/><stop offset="0.2" stop-color="#8f8f8f"/><stop offset="0.45" stop-color="#151515"/><stop offset="1" stop-color="#0a0a0a"/></linearGradient>
</defs><rect x="0" y="0" width="293.3" height="270" fill="url(#gTeal)"/><rect x="0" y="0" width="293.3" height="1.6" fill="#2f5a69"/><rect x="0" y="0" width="1.6" height="270" fill="#3a6b7c"/><rect x="291.7" y="0" width="1.6" height="270" fill="#3a6b7c"/><rect x="17.2" y="15.8" width="260.6" height="95.6" fill="url(#pTealMesh)"/><circle cx="6.3" cy="6.6" r="3.2" fill="url(#gScrewD)"/><circle cx="62.9" cy="6.6" r="3.2" fill="url(#gScrewD)"/><circle cx="120.6" cy="6.6" r="3.2" fill="url(#gScrewD)"/><circle cx="176.2" cy="6.6" r="3.2" fill="url(#gScrewD)"/><circle cx="232.8" cy="6.6" r="3.2" fill="url(#gScrewD)"/><circle cx="287.1" cy="6.6" r="3.2" fill="url(#gScrewD)"/><circle cx="6.3" cy="107.3" r="3.2" fill="url(#gScrewD)"/><circle cx="287.1" cy="107.3" r="3.2" fill="url(#gScrewD)"/><circle cx="6.3" cy="177" r="3.2" fill="url(#gScrewD)"/><circle cx="287.1" cy="177" r="3.2" fill="url(#gScrewD)"/><rect x="126.3" y="129.4" width="41.4" height="8.6" fill="url(#gTealHnd)"/></g></svg>
<div style="left:618.1px;top:576.7px;width:110.7px;height:21.9px;background:#8294a3;border:1.5px solid #0a0a0a"></div><span style="left:628.30px;top:580.17px;font-size:15.1px;line-height:15.1px;color:#f2f2f2;letter-spacing:0.273px;">DeviceTOM2</span>
<div style="left:571.5px;top:670.2px;width:204.2px;height:21.8px;background:#8294a3;border:1.5px solid #0a0a0a"></div><span style="left:581.70px;top:673.62px;font-size:15.1px;line-height:15.1px;color:#f2f2f2;letter-spacing:0.234px;">test42-panel - Patch Panel</span>
<div style="left:617.7px;top:857.0px;width:111.3px;height:21.4px;background:#8294a3;border:1.5px solid #0a0a0a"></div><span style="left:627.90px;top:860.22px;font-size:15.1px;line-height:15.1px;color:#f2f2f2;letter-spacing:0.275px;">Newly Added</span>
<div style="left:633.3px;top:989.8px;width:80.1px;height:21.9px;background:#8294a3;border:1.5px solid #0a0a0a"></div><span style="left:643.50px;top:993.27px;font-size:15.1px;line-height:15.1px;color:#f2f2f2;letter-spacing:0.224px;">testports</span>
<div style="left:645.0px;top:1030.0px;width:56.7px;height:21.5px;background:#8294a3;border:1.5px solid #0a0a0a"></div><span style="left:655.20px;top:1033.27px;font-size:15.1px;line-height:15.1px;color:#f2f2f2;letter-spacing:0.053px;">apic1</span>
<div style="left:626.0px;top:1177.3px;width:94.4px;height:21.2px;background:#8294a3;border:1.5px solid #0a0a0a"></div><span style="left:636.20px;top:1180.42px;font-size:15.1px;line-height:15.1px;color:#f2f2f2;letter-spacing:0.202px;">chassis-02</span>
<div style="left:624.8px;top:1483.8px;width:96.8px;height:21.2px;background:#8294a3;border:1.5px solid #0a0a0a"></div><span style="left:635.00px;top:1486.92px;font-size:15.1px;line-height:15.1px;color:#f2f2f2;letter-spacing:0.192px;">new-switch</span>
<span style="left:1241.52px;top:554.59px;font-size:15.6px;line-height:15.6px;color:#a4aebb;">41</span>
<span style="left:1241.52px;top:581.23px;font-size:15.6px;line-height:15.6px;color:#a4aebb;">40</span>
<span style="left:1241.52px;top:607.87px;font-size:15.6px;line-height:15.6px;color:#a4aebb;">39</span>
<span style="left:1241.52px;top:634.51px;font-size:15.6px;line-height:15.6px;color:#a4aebb;">38</span>
<span style="left:1241.52px;top:661.15px;font-size:15.6px;line-height:15.6px;color:#a4aebb;">37</span>
<span style="left:1241.52px;top:687.79px;font-size:15.6px;line-height:15.6px;color:#a4aebb;">36</span>
<span style="left:1241.52px;top:714.43px;font-size:15.6px;line-height:15.6px;color:#a4aebb;">35</span>
<span style="left:1241.52px;top:741.07px;font-size:15.6px;line-height:15.6px;color:#a4aebb;">34</span>
<span style="left:1241.52px;top:767.71px;font-size:15.6px;line-height:15.6px;color:#a4aebb;">33</span>
<span style="left:1241.52px;top:794.35px;font-size:15.6px;line-height:15.6px;color:#a4aebb;">32</span>
<span style="left:1241.52px;top:820.99px;font-size:15.6px;line-height:15.6px;color:#a4aebb;">31</span>
<span style="left:1241.52px;top:847.63px;font-size:15.6px;line-height:15.6px;color:#a4aebb;">30</span>
<span style="left:1241.52px;top:874.27px;font-size:15.6px;line-height:15.6px;color:#a4aebb;">29</span>
<span style="left:1241.52px;top:900.91px;font-size:15.6px;line-height:15.6px;color:#a4aebb;">28</span>
<span style="left:1241.52px;top:927.55px;font-size:15.6px;line-height:15.6px;color:#a4aebb;">27</span>
<span style="left:1241.52px;top:954.19px;font-size:15.6px;line-height:15.6px;color:#a4aebb;">26</span>
<span style="left:1241.52px;top:980.83px;font-size:15.6px;line-height:15.6px;color:#a4aebb;">25</span>
<span style="left:1241.52px;top:1007.47px;font-size:15.6px;line-height:15.6px;color:#a4aebb;">24</span>
<span style="left:1241.52px;top:1034.11px;font-size:15.6px;line-height:15.6px;color:#a4aebb;">23</span>
<span style="left:1241.52px;top:1060.75px;font-size:15.6px;line-height:15.6px;color:#a4aebb;">22</span>
<span style="left:1241.52px;top:1087.39px;font-size:15.6px;line-height:15.6px;color:#a4aebb;">21</span>
<span style="left:1241.52px;top:1114.03px;font-size:15.6px;line-height:15.6px;color:#a4aebb;">20</span>
<span style="left:1241.52px;top:1140.67px;font-size:15.6px;line-height:15.6px;color:#a4aebb;">19</span>
<span style="left:1241.52px;top:1167.31px;font-size:15.6px;line-height:15.6px;color:#a4aebb;">18</span>
<span style="left:1241.52px;top:1193.95px;font-size:15.6px;line-height:15.6px;color:#a4aebb;">17</span>
<span style="left:1241.52px;top:1220.59px;font-size:15.6px;line-height:15.6px;color:#a4aebb;">16</span>
<span style="left:1241.52px;top:1247.23px;font-size:15.6px;line-height:15.6px;color:#a4aebb;">15</span>
<span style="left:1241.52px;top:1273.87px;font-size:15.6px;line-height:15.6px;color:#a4aebb;">14</span>
<span style="left:1241.52px;top:1300.51px;font-size:15.6px;line-height:15.6px;color:#a4aebb;">13</span>
<span style="left:1241.52px;top:1327.15px;font-size:15.6px;line-height:15.6px;color:#a4aebb;">12</span>
<span style="left:1242.11px;top:1353.79px;font-size:15.6px;line-height:15.6px;color:#a4aebb;">11</span>
<span style="left:1241.52px;top:1380.43px;font-size:15.6px;line-height:15.6px;color:#a4aebb;">10</span>
<span style="left:1245.87px;top:1407.07px;font-size:15.6px;line-height:15.6px;color:#a4aebb;">9</span>
<span style="left:1245.87px;top:1433.71px;font-size:15.6px;line-height:15.6px;color:#a4aebb;">8</span>
<span style="left:1245.87px;top:1460.35px;font-size:15.6px;line-height:15.6px;color:#a4aebb;">7</span>
<span style="left:1245.87px;top:1486.99px;font-size:15.6px;line-height:15.6px;color:#a4aebb;">6</span>
<span style="left:1245.87px;top:1513.63px;font-size:15.6px;line-height:15.6px;color:#a4aebb;">5</span>
<div style="left:1285.4px;top:490.7px;width:444.8px;height:482.2px;border:5.8px solid #f03344;border-radius:5px"></div>
<span style="left:1299.50px;top:508.25px;font-size:31.6px;line-height:31.6px;color:#ebedf0;letter-spacing:-1.107px;-webkit-text-stroke:0.35px #ebedf0;">Name: CHI-DC1-01</span>
<span style="left:1299.50px;top:561.05px;font-size:31.6px;line-height:31.6px;color:#ebedf0;letter-spacing:-1.679px;-webkit-text-stroke:0.35px #ebedf0;">Size: 42</span>
<span style="left:1299.50px;top:613.85px;font-size:31.6px;line-height:31.6px;color:#ebedf0;letter-spacing:-0.790px;-webkit-text-stroke:0.35px #ebedf0;">Vendor:</span>
<span style="left:1299.50px;top:666.65px;font-size:31.6px;line-height:31.6px;color:#ebedf0;letter-spacing:-1.221px;-webkit-text-stroke:0.35px #ebedf0;">Available (Us): 8</span>
<span style="left:1299.50px;top:719.45px;font-size:31.6px;line-height:31.6px;color:#ebedf0;letter-spacing:-0.754px;-webkit-text-stroke:0.35px #ebedf0;">Number of Devices: 8</span>
<span style="left:1299.50px;top:772.25px;font-size:31.6px;line-height:31.6px;color:#ebedf0;letter-spacing:-0.973px;-webkit-text-stroke:0.35px #ebedf0;">Total Power Ports:</span>
<span style="left:1299.50px;top:825.05px;font-size:31.6px;line-height:31.6px;color:#ebedf0;letter-spacing:-0.940px;-webkit-text-stroke:0.35px #ebedf0;">Open Power Ports:</span>
<span style="left:1299.50px;top:877.85px;font-size:31.6px;line-height:31.6px;color:#ebedf0;letter-spacing:-0.833px;-webkit-text-stroke:0.35px #ebedf0;">Tags: Development, App, rack</span>
<span style="left:1299.50px;top:930.65px;font-size:31.6px;line-height:31.6px;color:#ebedf0;letter-spacing:-0.885px;-webkit-text-stroke:0.35px #ebedf0;">Notes:</span>
<span style="left:1300.30px;top:984.25px;font-size:31.6px;line-height:31.6px;color:#0d99e1;letter-spacing:-0.935px;-webkit-text-stroke:0.3px #0d99e1;">View CHI-DC1-01 Layout</span>
<span style="left:1300.30px;top:1037.05px;font-size:31.6px;line-height:31.6px;color:#0d99e1;letter-spacing:-1.035px;-webkit-text-stroke:0.3px #0d99e1;">View CHI-DC1-01 Power Unit Map</span>
<span style="left:1300.30px;top:1089.85px;font-size:31.6px;line-height:31.6px;color:#0d99e1;letter-spacing:-0.908px;-webkit-text-stroke:0.3px #0d99e1;">View CHI-DC1-01 details</span>
<span style="left:1300.30px;top:1142.65px;font-size:31.6px;line-height:31.6px;color:#0d99e1;letter-spacing:-0.521px;-webkit-text-stroke:0.3px #0d99e1;">Power/Utilization Charts</span>
<svg style="left:0;top:0" width="2390" height="600" viewBox="0 0 2390 600" stroke="#e0212b" stroke-width="3.6" fill="none"><path d="M1846.2 503.2L1858.8 515.8M1858.8 503.2L1846.2 515.8"/></svg>
<div style="left:1299.1px;top:1184.3px;width:269.8px;height:83.5px;border-radius:13px;background:#63a4fa"></div>
<div style="left:1575.2px;top:1184.3px;width:281.8px;height:83.5px;border-radius:13px;background:#63a4fa"></div>
<span style="left:1338.50px;top:1211.27px;font-size:30.4px;line-height:30.4px;color:#0a0a0a;letter-spacing:-0.066px;-webkit-text-stroke:0.3px #0a0a0a;">Rotate 90 deg</span>
<span style="left:1614.60px;top:1211.27px;font-size:30.4px;line-height:30.4px;color:#0a0a0a;letter-spacing:-0.441px;-webkit-text-stroke:0.3px #0a0a0a;">Rotate 180 deg</span>
<div style="left:810.5px;top:473.6px;width:433.5px;height:700.1px;background:#181c25;border:2.6px solid #06070a"></div>
<svg style="left:0;top:0" width="2390" height="600" viewBox="0 0 2390 600" stroke="#fff" stroke-width="3.4" fill="none"><path d="M1210.3 505.3L1221.7 516.7M1221.7 505.3L1210.3 516.7"/></svg>
<span style="left:835.60px;top:547.16px;font-size:38.2px;line-height:38.2px;color:#566579;letter-spacing:-0.359px;font-weight:700;">Device</span>
<span style="left:835.60px;top:632.45px;font-size:31.6px;line-height:31.6px;color:#ebedf0;letter-spacing:-1.184px;-webkit-text-stroke:0.35px #ebedf0;">Name: DeviceTOM2</span>
<span style="left:835.60px;top:685.45px;font-size:31.6px;line-height:31.6px;color:#ebedf0;letter-spacing:-1.143px;-webkit-text-stroke:0.35px #ebedf0;">Type: physical</span>
<span style="left:835.60px;top:738.45px;font-size:31.6px;line-height:31.6px;color:#ebedf0;letter-spacing:-1.199px;-webkit-text-stroke:0.35px #ebedf0;">Subtype: Rackable</span>
<span style="left:835.60px;top:791.45px;font-size:31.6px;line-height:31.6px;color:#ebedf0;letter-spacing:-1.510px;-webkit-text-stroke:0.35px #ebedf0;">In Service: Yes</span>
<span style="left:835.60px;top:844.45px;font-size:31.6px;line-height:31.6px;color:#ebedf0;letter-spacing:-1.169px;-webkit-text-stroke:0.35px #ebedf0;">Service Level: Retire</span>
<span style="left:835.60px;top:897.45px;font-size:31.6px;line-height:31.6px;color:#ebedf0;letter-spacing:-1.020px;-webkit-text-stroke:0.35px #ebedf0;">Hardware Model: 2924XLv</span>
<span style="left:835.60px;top:950.45px;font-size:31.6px;line-height:31.6px;color:#ebedf0;letter-spacing:-0.560px;-webkit-text-stroke:0.35px #ebedf0;">Application Owner: David</span>
<span style="left:835.60px;top:1003.45px;font-size:31.6px;line-height:31.6px;color:#0d99e1;letter-spacing:-1.024px;-webkit-text-stroke:0.3px #0d99e1;">View DeviceTOM2</span>
<div style="left:835.1px;top:1034.8px;width:247.2px;height:2.4px;background:#0d99e1"></div>
<span style="left:835.60px;top:1056.45px;font-size:31.6px;line-height:31.6px;color:#0d99e1;letter-spacing:-0.916px;-webkit-text-stroke:0.3px #0d99e1;">View Device Layout</span>
<div style="left:835.1px;top:1087.8px;width:262.4px;height:2.4px;background:#0d99e1"></div>
<span style="left:835.60px;top:1109.45px;font-size:31.6px;line-height:31.6px;color:#0d99e1;letter-spacing:-0.786px;-webkit-text-stroke:0.3px #0d99e1;">View Topology</span>
<div style="left:835.1px;top:1140.8px;width:194.2px;height:2.4px;background:#0d99e1"></div>
<div style="left:55px;top:1520px;width:1854px;height:13px;border-radius:6.5px;background:rgba(165,168,172,0.68)"></div>
<div style="left:2338px;top:383px;width:13px;height:693px;border-radius:6.5px;background:rgba(150,153,160,0.72)"></div>
</div></div>
</body></html>
